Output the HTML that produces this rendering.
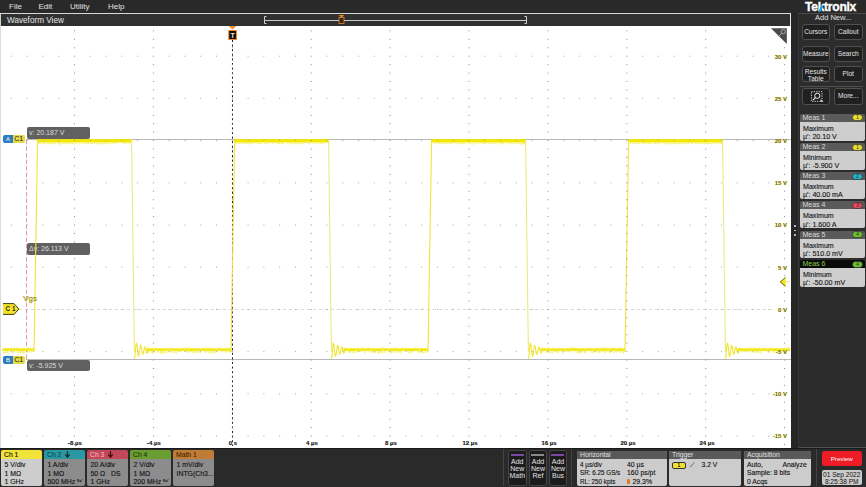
<!DOCTYPE html>
<html><head><meta charset="utf-8"><style>
*{box-sizing:border-box}
body{margin:0;width:866px;height:487px;overflow:hidden;background:#222;position:relative;font-family:"Liberation Sans",sans-serif}
.a{position:absolute}
svg{position:absolute;left:0;top:0}
.menu{left:0;top:0;width:866px;height:13px;background:#292929}
.menu span{position:absolute;top:1.5px;color:#e2e2e2;font-size:8px;line-height:10px}
.title{left:0;top:13px;width:791px;height:13px;background:#303030;border-top:1px solid #d8d8d8;border-left:1px solid #d0d0d0;border-right:1px solid #e8e8e8}
.title span{position:absolute;left:6px;top:0.5px;color:#e6e6e6;font-size:8.2px;line-height:11px}
.plot{left:0;top:26px;width:791px;height:421.8px;background:#fff;border-left:1px solid #dcdcdc}
.rpanel{left:791px;top:13px;width:75px;height:435.5px;background:#2c2c2c}
.btn{position:absolute;width:28.5px;height:16px;border:1px solid #505050;border-radius:3px;background:#202020;color:#e4e4e4;font-size:6.6px;text-align:center;line-height:14px}
.meas{position:absolute;left:800px;width:65px;height:27px}
.mh{position:absolute;left:0;top:0;width:65px;height:8px;background:#5a5a5a;color:#dadada;font-size:7px;line-height:8px;padding-left:2.5px;border-radius:2px 2px 0 0}
.mb{position:absolute;left:0;top:8px;width:65px;height:19px;background:#cecece;color:#151515;font-size:7.1px;line-height:8.2px;padding:3.2px 0 0 3px;border-radius:0 0 2px 2px}
.badge{position:absolute;left:52px;top:1.2px;width:10px;height:5.8px;border-radius:3px;font-size:5px;line-height:5.8px;text-align:center;color:#333;display:flex;align-items:center;justify-content:center;box-shadow:0 0 0 0.5px #333}
.bot{left:0;top:447.8px;width:866px;height:39px;background:#2a2a2a;border-top:1px solid #1a1a1a}
.ch{position:absolute;top:450px;width:41.2px;height:35.6px;border-radius:2px;overflow:hidden}
.chh{height:9.3px;font-size:6.8px;line-height:9.3px;padding-left:3px}
.chb{height:26.3px;background:#8c8c8c;color:#111;font-size:6.9px;line-height:8.4px;padding:2px 0 0 3.5px}
.pnl{position:absolute;top:450.5px;height:35.5px;border-radius:2px;overflow:hidden;background:#cccccc}
.pnh{height:8.3px;background:#5a5a5a;color:#e0e0e0;font-size:6.8px;line-height:8.3px;padding-left:3px}
.pnb{color:#111;font-size:6.4px;line-height:8.4px;padding:1.3px 0 0 3px;position:relative;height:27px}
.ylab{position:absolute;color:#6e680e;font-size:6px;line-height:6px;text-align:right;width:30px;font-weight:bold;text-shadow:0 0 1.2px #f4ee60}
.xlab{position:absolute;color:#111;font-size:6px;line-height:7px;width:30px;text-align:center;font-weight:bold}
.cur{position:absolute;background:#606060;color:#dcdcdc;font-size:7px;line-height:11.5px;border-radius:2px;padding-left:2px}
.pnb,.chb,.mb,.xlab,.chh{-webkit-text-stroke:0.12px currentColor}
</style></head><body>
<div class="a menu">
 <span style="left:9px">File</span><span style="left:38.5px">Edit</span><span style="left:70px">Utility</span><span style="left:108px">Help</span>
</div>
<div class="a title"><span>Waveform View</span></div>
<div class="a plot"></div>
<svg width="866" height="487">
 <line x1="26" y1="139.5" x2="791" y2="139.5" stroke="#b8b8b8" stroke-width="1"/>
 <line x1="26" y1="359.5" x2="791" y2="359.5" stroke="#b8b8b8" stroke-width="1"/>
 <line x1="26.5" y1="140" x2="26.5" y2="359" stroke="#e89aa2" stroke-width="1" stroke-dasharray="4.5,2"/>
 <line x1="19" y1="309.5" x2="775" y2="309.5" stroke="#d8d8d8" stroke-width="1" stroke-dasharray="3,3"/>
 <line x1="232.5" y1="40" x2="232.5" y2="446" stroke="#222" stroke-width="1" stroke-dasharray="2,2.6"/>
 <rect x="2.50" y="348.30" width="31.50" height="2.70" fill="#f2e800"/><path d="M2.5,351.3 L3.0,352.0 L3.6,352.3 L4.1,353.2 L4.7,352.0 L5.2,353.1 L5.8,347.6 L6.3,350.3 L6.9,353.2 L7.4,351.4 L8.0,353.0 L8.5,348.1 L9.1,350.3 L9.7,348.9 L10.2,350.8 L10.8,351.0 L11.3,347.5 L11.9,348.7 L12.4,349.1 L13.0,353.1 L13.5,352.1 L14.1,348.4 L14.6,352.3 L15.2,348.3 L15.7,351.2 L16.3,348.2 L16.8,347.4 L17.4,352.8 L17.9,348.7 L18.5,348.7 L19.0,353.5 L19.6,352.8 L20.1,349.2 L20.7,353.4 L21.2,350.7 L21.8,351.6 L22.3,348.7 L22.9,353.2 L23.4,351.7 L24.0,353.4 L24.5,352.9 L25.1,349.3 L25.6,349.6 L26.2,348.4 L26.7,348.3 L27.3,347.8 L27.8,349.3 L28.4,351.1 L28.9,347.4 L29.5,351.6 L30.0,349.5 L30.6,349.3 L31.1,352.5 L31.7,350.4 L32.2,349.4 L32.8,350.4 L33.3,351.8 L33.9,347.8" fill="none" stroke="#f2ec50" stroke-width="0.7"/><line x1="34.00" y1="352" x2="37.60" y2="140" stroke="#eee440" stroke-width="1.1"/><rect x="37.40" y="139.10" width="94.20" height="3.30" fill="#f2e800"/><path d="M37.4,144.3 L37.9,141.7 L38.5,143.7 L39.0,144.0 L39.6,141.7 L40.1,143.8 L40.7,142.6 L41.2,143.2 L41.8,141.6 L42.3,141.7 L42.9,142.1 L43.4,144.3 L44.0,142.2 L44.5,143.7 L45.1,144.2 L45.6,144.2 L46.2,142.6 L46.7,142.6 L47.3,143.1 L47.8,143.8 L48.4,141.9 L48.9,143.7 L49.5,143.8 L50.0,144.0 L50.6,141.7 L51.1,144.2 L51.7,141.9 L52.2,142.6 L52.8,143.3 L53.3,144.2 L53.9,142.6 L54.4,144.2 L55.0,143.1 L55.5,142.5 L56.1,142.5 L56.6,142.1 L57.2,141.8 L57.7,142.0 L58.3,143.5 L58.8,144.4 L59.4,142.1 L59.9,141.7 L60.5,144.4 L61.0,143.1 L61.6,142.7 L62.1,142.3 L62.7,143.3 L63.2,143.9 L63.8,142.9 L64.3,142.8 L64.9,141.8 L65.4,144.2 L66.0,141.7 L66.5,143.0 L67.1,143.9 L67.6,142.0 L68.2,143.6 L68.7,144.3 L69.3,143.4 L69.8,143.8 L70.4,141.9 L70.9,142.8 L71.5,142.0 L72.0,144.0 L72.6,142.4 L73.1,142.9 L73.7,144.4 L74.2,144.0 L74.8,144.3 L75.3,142.9 L75.9,143.0 L76.4,143.6 L77.0,142.9 L77.5,142.4 L78.1,142.7 L78.6,142.0 L79.2,142.7 L79.7,144.4 L80.3,144.3 L80.8,143.4 L81.4,143.0 L81.9,142.5 L82.5,141.8 L83.0,142.4 L83.6,143.8 L84.1,144.0 L84.7,142.6 L85.2,143.8 L85.8,143.8 L86.3,143.5 L86.9,143.5 L87.4,143.7 L88.0,142.6 L88.5,143.6 L89.1,142.4 L89.6,143.0 L90.2,143.8 L90.7,143.5 L91.3,142.4 L91.8,144.2 L92.4,143.4 L92.9,143.2 L93.5,141.6 L94.0,143.1 L94.6,142.3 L95.1,143.5 L95.7,142.9 L96.2,143.9 L96.8,143.4 L97.3,143.8 L97.9,142.6 L98.4,143.4 L99.0,143.7 L99.5,143.9 L100.1,142.6 L100.6,144.0 L101.2,144.0 L101.7,143.5 L102.3,144.3 L102.8,144.3 L103.4,143.1 L103.9,143.1 L104.5,142.1 L105.0,143.9 L105.6,144.2 L106.1,142.9 L106.7,143.5 L107.2,143.6 L107.8,143.6 L108.3,142.1 L108.9,143.8 L109.4,143.2 L110.0,143.5 L110.5,142.8 L111.1,143.3 L111.6,143.8 L112.2,143.4 L112.7,143.6 L113.3,141.7 L113.8,142.0 L114.4,142.8 L114.9,143.4 L115.5,142.2 L116.0,143.5 L116.6,143.4 L117.1,141.7 L117.7,142.9 L118.2,142.2 L118.8,141.8 L119.3,142.0 L119.9,142.5 L120.4,142.1 L121.0,142.1 L121.5,141.7 L122.1,142.9 L122.6,142.7 L123.2,143.3 L123.7,143.3 L124.3,142.3 L124.8,144.1 L125.4,141.6 L125.9,142.7 L126.5,142.4 L127.0,142.7 L127.6,141.9 L128.1,143.9 L128.7,142.6 L129.2,141.7 L129.8,143.3 L130.3,141.9 L130.9,143.1 L131.4,142.6" fill="none" stroke="#f2ec50" stroke-width="0.7"/><line x1="131.60" y1="141" x2="134.40" y2="352" stroke="#ece870" stroke-width="1"/><rect x="146.40" y="348.30" width="84.60" height="2.70" fill="#f2e800"/><path d="M146.4,351.0 L147.0,353.3 L147.5,352.5 L148.1,350.0 L148.6,352.4 L149.2,351.4 L149.7,349.7 L150.3,348.3 L150.8,351.1 L151.4,350.9 L151.9,353.3 L152.5,353.4 L153.0,351.2 L153.6,349.6 L154.1,352.9 L154.7,347.4 L155.2,348.1 L155.8,350.9 L156.3,351.2 L156.9,348.3 L157.4,351.3 L158.0,352.9 L158.5,349.7 L159.1,350.1 L159.6,348.8 L160.2,349.2 L160.7,353.4 L161.3,349.8 L161.8,353.4 L162.4,353.1 L162.9,351.1 L163.5,349.0 L164.0,353.5 L164.6,350.5 L165.1,350.0 L165.7,349.4 L166.2,353.5 L166.8,350.4 L167.3,349.2 L167.9,350.4 L168.4,348.2 L169.0,351.3 L169.5,350.1 L170.1,349.2 L170.6,352.2 L171.2,352.5 L171.7,347.5 L172.3,350.7 L172.8,349.1 L173.4,353.2 L173.9,352.2 L174.5,348.9 L175.0,349.1 L175.6,348.4 L176.1,353.5 L176.7,349.2 L177.2,351.2 L177.8,350.3 L178.3,351.4 L178.9,351.1 L179.4,352.0 L180.0,348.1 L180.5,352.1 L181.1,349.3 L181.6,350.7 L182.2,349.5 L182.7,349.2 L183.3,350.7 L183.8,350.3 L184.4,349.6 L184.9,352.0 L185.5,351.1 L186.0,347.6 L186.6,349.0 L187.1,350.2 L187.7,353.1 L188.2,352.9 L188.8,350.8 L189.3,347.5 L189.9,352.2 L190.4,350.1 L191.0,351.0 L191.5,351.8 L192.1,351.3 L192.6,350.4 L193.2,353.1 L193.7,349.8 L194.3,349.8 L194.8,352.7 L195.4,348.6 L195.9,349.2 L196.5,352.5 L197.0,347.8 L197.6,352.6 L198.1,351.7 L198.7,350.1 L199.2,349.2 L199.8,352.2 L200.3,353.0 L200.9,348.3 L201.4,350.4 L202.0,350.8 L202.5,350.5 L203.1,349.5 L203.6,348.4 L204.2,351.0 L204.7,352.4 L205.3,347.8 L205.8,348.8 L206.4,352.5 L206.9,352.3 L207.5,351.5 L208.0,347.6 L208.6,351.9 L209.1,353.5 L209.7,353.6 L210.2,351.7 L210.8,347.7 L211.3,352.6 L211.9,348.8 L212.4,351.4 L213.0,353.3 L213.5,351.8 L214.1,348.2 L214.6,349.2 L215.2,353.1 L215.7,348.3 L216.3,351.2 L216.8,350.0 L217.4,348.4 L217.9,351.3 L218.5,347.7 L219.0,348.1 L219.6,349.8 L220.1,347.8 L220.7,347.8 L221.2,351.0 L221.8,352.0 L222.3,352.8 L222.9,348.2 L223.4,350.1 L224.0,349.4 L224.5,351.1 L225.1,350.4 L225.6,353.2 L226.2,349.7 L226.7,347.7 L227.3,351.7 L227.8,348.3 L228.4,351.3 L228.9,350.5 L229.5,353.0 L230.0,350.8 L230.6,351.2" fill="none" stroke="#f2ec50" stroke-width="0.7"/><path d="M134.40,358.90 L134.65,358.13 L134.90,356.32 L135.15,353.79 L135.40,350.89 L135.65,348.04 L135.90,345.62 L136.15,343.95 L136.40,343.21 L136.65,343.47 L136.90,344.64 L137.15,346.53 L137.40,348.84 L137.65,351.25 L137.90,353.43 L138.15,355.08 L138.40,356.01 L138.65,356.13 L138.90,355.45 L139.15,354.10 L139.40,352.29 L139.65,350.30 L139.90,348.39 L140.15,346.83 L140.40,345.81 L140.65,345.44 L140.90,345.75 L141.15,346.66 L141.40,348.02 L141.65,349.64 L141.90,351.27 L142.15,352.69 L142.40,353.73 L142.65,354.26 L142.90,354.23 L143.15,353.66 L143.40,352.67 L143.65,351.39 L143.90,350.03 L144.15,348.76 L144.40,347.76 L144.65,347.15 L144.90,346.99 L145.15,347.29 L145.40,347.98 L145.65,348.96 L145.90,350.07 L146.15,351.17 L146.40,352.10 L146.65,352.75 L146.90,353.03 L147.15,352.93 L147.40,352.48 L147.65,351.75 L147.90,350.86 L148.15,349.93 L148.40,349.10 L148.65,348.46 L148.90,348.10 L149.15,348.06" fill="none" stroke="#efe42a" stroke-width="1.05"/><line x1="231.00" y1="352" x2="234.60" y2="140" stroke="#eee440" stroke-width="1.1"/><rect x="234.40" y="139.10" width="94.20" height="3.30" fill="#f2e800"/><path d="M234.4,142.3 L235.0,143.1 L235.5,142.3 L236.1,143.7 L236.6,143.0 L237.2,142.0 L237.7,142.3 L238.3,142.6 L238.8,143.7 L239.4,142.1 L239.9,143.6 L240.5,143.4 L241.0,141.8 L241.6,143.5 L242.1,141.9 L242.7,141.9 L243.2,143.3 L243.8,142.3 L244.3,144.1 L244.9,142.9 L245.4,142.5 L246.0,143.8 L246.5,141.7 L247.1,143.6 L247.6,141.8 L248.2,142.0 L248.7,144.3 L249.3,143.5 L249.8,142.2 L250.4,141.9 L250.9,144.3 L251.5,143.5 L252.0,143.9 L252.6,142.0 L253.1,143.3 L253.7,142.6 L254.2,142.3 L254.8,142.5 L255.3,143.3 L255.9,142.6 L256.4,142.7 L257.0,142.0 L257.5,143.9 L258.1,143.4 L258.6,143.9 L259.2,142.8 L259.7,144.0 L260.3,143.0 L260.8,143.3 L261.4,143.2 L261.9,143.7 L262.5,142.7 L263.0,141.9 L263.6,141.7 L264.1,142.2 L264.7,141.7 L265.2,144.1 L265.8,142.9 L266.3,143.7 L266.9,141.6 L267.4,142.9 L268.0,144.1 L268.5,143.3 L269.1,142.8 L269.6,142.9 L270.2,141.9 L270.7,142.0 L271.3,142.0 L271.8,142.6 L272.4,142.7 L272.9,144.1 L273.5,142.0 L274.0,142.3 L274.6,142.4 L275.1,142.1 L275.7,142.4 L276.2,142.3 L276.8,142.9 L277.3,141.7 L277.9,144.2 L278.4,142.6 L279.0,144.2 L279.5,143.5 L280.1,143.5 L280.6,142.9 L281.2,144.2 L281.7,141.9 L282.3,143.5 L282.8,142.4 L283.4,143.5 L283.9,143.6 L284.5,142.1 L285.0,142.2 L285.6,141.7 L286.1,142.2 L286.7,141.8 L287.2,142.7 L287.8,144.3 L288.3,142.6 L288.9,142.5 L289.4,142.9 L290.0,142.4 L290.5,143.7 L291.1,143.6 L291.6,142.1 L292.2,142.3 L292.7,143.5 L293.3,144.2 L293.8,143.4 L294.4,142.8 L294.9,144.3 L295.5,141.6 L296.0,141.8 L296.6,143.8 L297.1,142.7 L297.7,141.7 L298.2,143.1 L298.8,144.4 L299.3,143.1 L299.9,142.6 L300.4,141.9 L301.0,141.8 L301.5,144.1 L302.1,143.0 L302.6,144.2 L303.2,141.8 L303.7,142.3 L304.3,141.7 L304.8,142.7 L305.4,141.8 L305.9,142.3 L306.5,142.7 L307.0,142.5 L307.6,141.7 L308.1,141.7 L308.7,144.3 L309.2,142.1 L309.8,143.0 L310.3,142.7 L310.9,143.1 L311.4,141.8 L312.0,142.5 L312.5,141.9 L313.1,143.1 L313.6,144.2 L314.2,143.3 L314.7,144.0 L315.3,142.2 L315.8,141.6 L316.4,143.1 L316.9,143.0 L317.5,143.2 L318.0,142.7 L318.6,143.4 L319.1,143.6 L319.7,144.2 L320.2,142.5 L320.8,142.9 L321.3,143.9 L321.9,142.2 L322.4,141.9 L323.0,142.5 L323.5,141.8 L324.1,143.8 L324.6,143.9 L325.2,142.5 L325.7,142.0 L326.3,141.8 L326.8,142.3 L327.4,141.8 L327.9,142.8 L328.5,143.2" fill="none" stroke="#f2ec50" stroke-width="0.7"/><line x1="328.60" y1="141" x2="331.40" y2="352" stroke="#ece870" stroke-width="1"/><rect x="343.40" y="348.30" width="84.60" height="2.70" fill="#f2e800"/><path d="M343.4,348.9 L344.0,347.8 L344.5,351.7 L345.1,347.7 L345.6,348.6 L346.2,349.2 L346.7,349.7 L347.3,348.0 L347.8,350.0 L348.4,349.3 L348.9,352.1 L349.5,350.8 L350.0,353.0 L350.6,351.5 L351.1,352.1 L351.7,351.0 L352.2,350.1 L352.8,352.5 L353.3,351.5 L353.9,353.3 L354.4,351.9 L355.0,351.7 L355.5,349.1 L356.1,352.4 L356.6,349.8 L357.2,348.2 L357.7,347.8 L358.3,348.5 L358.8,349.0 L359.4,351.6 L359.9,349.2 L360.5,347.8 L361.0,352.1 L361.6,350.9 L362.1,347.6 L362.7,347.7 L363.2,348.2 L363.8,349.6 L364.3,352.7 L364.9,353.3 L365.4,351.2 L366.0,348.8 L366.5,350.1 L367.1,349.6 L367.6,349.4 L368.2,347.5 L368.7,351.0 L369.3,352.5 L369.8,351.9 L370.4,348.0 L370.9,350.7 L371.5,348.5 L372.0,351.8 L372.6,350.2 L373.1,353.2 L373.7,352.3 L374.2,348.1 L374.8,349.4 L375.3,353.1 L375.9,350.3 L376.4,350.1 L377.0,350.1 L377.5,352.2 L378.1,353.2 L378.6,350.7 L379.2,353.4 L379.7,351.1 L380.3,348.0 L380.8,352.4 L381.4,350.0 L381.9,347.7 L382.5,353.5 L383.0,347.6 L383.6,351.0 L384.1,350.4 L384.7,352.9 L385.2,349.8 L385.8,348.7 L386.3,349.1 L386.9,348.6 L387.4,350.9 L388.0,349.6 L388.5,352.1 L389.1,348.9 L389.6,349.6 L390.2,348.9 L390.7,353.5 L391.3,352.6 L391.8,352.7 L392.4,351.2 L392.9,349.9 L393.5,348.3 L394.0,352.6 L394.6,350.4 L395.1,347.6 L395.7,348.5 L396.2,348.0 L396.8,351.8 L397.3,353.0 L397.9,348.6 L398.4,352.3 L399.0,349.4 L399.5,351.6 L400.1,352.8 L400.6,351.3 L401.2,352.4 L401.7,349.7 L402.3,347.5 L402.8,350.6 L403.4,351.0 L403.9,348.5 L404.5,349.8 L405.0,349.4 L405.6,347.6 L406.1,349.3 L406.7,349.8 L407.2,350.4 L407.8,351.8 L408.3,349.9 L408.9,353.5 L409.4,352.5 L410.0,353.1 L410.5,351.7 L411.1,351.6 L411.6,350.7 L412.2,352.4 L412.7,349.6 L413.3,351.1 L413.8,351.6 L414.4,350.6 L414.9,349.2 L415.5,347.9 L416.0,347.9 L416.6,349.6 L417.1,351.0 L417.7,352.1 L418.2,351.8 L418.8,349.3 L419.3,353.2 L419.9,349.1 L420.4,351.8 L421.0,347.8 L421.5,352.1 L422.1,351.6 L422.6,353.3 L423.2,353.0 L423.7,351.7 L424.3,352.6 L424.8,352.0 L425.4,351.2 L425.9,348.7 L426.5,350.6 L427.0,353.0 L427.6,348.9" fill="none" stroke="#f2ec50" stroke-width="0.7"/><path d="M331.40,358.90 L331.65,358.13 L331.90,356.32 L332.15,353.79 L332.40,350.89 L332.65,348.04 L332.90,345.62 L333.15,343.95 L333.40,343.21 L333.65,343.47 L333.90,344.64 L334.15,346.53 L334.40,348.84 L334.65,351.25 L334.90,353.43 L335.15,355.08 L335.40,356.01 L335.65,356.13 L335.90,355.45 L336.15,354.10 L336.40,352.29 L336.65,350.30 L336.90,348.39 L337.15,346.83 L337.40,345.81 L337.65,345.44 L337.90,345.75 L338.15,346.66 L338.40,348.02 L338.65,349.64 L338.90,351.27 L339.15,352.69 L339.40,353.73 L339.65,354.26 L339.90,354.23 L340.15,353.66 L340.40,352.67 L340.65,351.39 L340.90,350.03 L341.15,348.76 L341.40,347.76 L341.65,347.15 L341.90,346.99 L342.15,347.29 L342.40,347.98 L342.65,348.96 L342.90,350.07 L343.15,351.17 L343.40,352.10 L343.65,352.75 L343.90,353.03 L344.15,352.93 L344.40,352.48 L344.65,351.75 L344.90,350.86 L345.15,349.93 L345.40,349.10 L345.65,348.46 L345.90,348.10 L346.15,348.06" fill="none" stroke="#efe42a" stroke-width="1.05"/><line x1="428.00" y1="352" x2="431.60" y2="140" stroke="#eee440" stroke-width="1.1"/><rect x="431.40" y="139.10" width="94.20" height="3.30" fill="#f2e800"/><path d="M431.4,144.3 L431.9,143.1 L432.5,142.7 L433.1,141.6 L433.6,142.7 L434.2,142.1 L434.7,143.4 L435.3,144.1 L435.8,144.1 L436.4,143.3 L436.9,142.7 L437.5,141.9 L438.0,143.5 L438.6,143.1 L439.1,143.6 L439.7,142.6 L440.2,144.1 L440.8,142.2 L441.3,142.5 L441.9,142.3 L442.4,143.3 L443.0,144.1 L443.5,142.1 L444.1,143.4 L444.6,143.7 L445.2,142.2 L445.7,141.8 L446.3,143.2 L446.8,143.9 L447.4,144.1 L447.9,143.6 L448.5,142.8 L449.0,142.8 L449.6,143.1 L450.1,144.1 L450.7,142.4 L451.2,142.4 L451.8,143.3 L452.3,144.3 L452.9,142.1 L453.4,141.7 L454.0,141.9 L454.5,143.2 L455.1,143.3 L455.6,142.1 L456.2,142.1 L456.7,143.3 L457.3,143.4 L457.8,143.5 L458.4,143.6 L458.9,141.8 L459.5,143.0 L460.0,143.9 L460.6,144.3 L461.1,142.5 L461.7,144.0 L462.2,143.4 L462.8,144.2 L463.3,142.2 L463.9,143.6 L464.4,144.0 L465.0,142.9 L465.5,141.9 L466.1,142.1 L466.6,142.0 L467.2,141.9 L467.7,142.0 L468.3,143.3 L468.8,141.9 L469.4,143.7 L469.9,143.7 L470.5,143.9 L471.0,143.9 L471.6,143.6 L472.1,144.2 L472.7,144.3 L473.2,143.4 L473.8,144.3 L474.3,141.9 L474.9,141.9 L475.4,141.8 L476.0,142.2 L476.5,142.6 L477.1,142.9 L477.6,143.5 L478.2,143.7 L478.7,141.8 L479.3,142.7 L479.8,143.1 L480.4,142.7 L480.9,141.9 L481.5,143.3 L482.0,142.6 L482.6,143.5 L483.1,143.0 L483.7,144.3 L484.2,144.2 L484.8,141.8 L485.3,143.7 L485.9,143.6 L486.4,142.4 L487.0,141.9 L487.5,142.9 L488.1,142.6 L488.6,143.7 L489.2,144.2 L489.7,142.7 L490.3,142.4 L490.8,143.0 L491.4,143.6 L491.9,143.8 L492.5,143.2 L493.0,142.4 L493.6,142.5 L494.1,144.0 L494.7,143.1 L495.2,141.7 L495.8,142.8 L496.3,142.3 L496.9,143.5 L497.4,141.8 L498.0,142.4 L498.5,141.9 L499.1,142.9 L499.6,144.4 L500.2,143.1 L500.7,142.7 L501.3,144.2 L501.8,141.9 L502.4,142.6 L502.9,143.9 L503.5,141.6 L504.0,143.7 L504.6,142.6 L505.1,141.6 L505.7,142.3 L506.2,142.9 L506.8,142.7 L507.3,143.0 L507.9,141.7 L508.4,142.2 L509.0,144.3 L509.5,142.8 L510.1,142.9 L510.6,141.8 L511.2,142.4 L511.7,144.3 L512.3,143.5 L512.8,143.0 L513.4,141.7 L513.9,142.7 L514.5,143.8 L515.0,142.8 L515.6,143.3 L516.1,144.1 L516.7,143.4 L517.2,143.4 L517.8,141.7 L518.3,141.7 L518.9,143.8 L519.4,142.8 L520.0,144.0 L520.5,143.9 L521.1,144.2 L521.6,142.7 L522.2,144.4 L522.7,143.7 L523.3,144.1 L523.8,142.0 L524.4,143.8 L524.9,142.8 L525.5,144.3" fill="none" stroke="#f2ec50" stroke-width="0.7"/><line x1="525.60" y1="141" x2="528.40" y2="352" stroke="#ece870" stroke-width="1"/><rect x="540.40" y="348.30" width="84.60" height="2.70" fill="#f2e800"/><path d="M540.4,353.6 L540.9,348.7 L541.5,350.0 L542.0,349.1 L542.6,350.3 L543.1,349.2 L543.7,351.5 L544.2,348.2 L544.8,348.4 L545.3,350.2 L545.9,347.9 L546.4,349.8 L547.0,353.0 L547.5,352.9 L548.1,348.6 L548.6,347.5 L549.2,352.5 L549.7,353.4 L550.3,351.1 L550.8,348.2 L551.4,348.9 L551.9,353.1 L552.5,353.2 L553.0,347.6 L553.6,348.5 L554.1,350.1 L554.7,349.1 L555.2,352.1 L555.8,349.7 L556.3,352.2 L556.9,348.3 L557.4,350.6 L558.0,353.4 L558.5,351.8 L559.1,348.0 L559.6,348.1 L560.2,351.4 L560.7,349.7 L561.3,349.7 L561.8,350.4 L562.4,351.0 L562.9,353.4 L563.5,348.9 L564.0,350.9 L564.6,349.0 L565.1,350.8 L565.7,351.9 L566.2,348.2 L566.8,350.4 L567.3,351.8 L567.9,347.5 L568.4,352.2 L569.0,350.0 L569.5,350.5 L570.1,351.2 L570.6,352.3 L571.2,347.7 L571.7,350.5 L572.3,347.6 L572.8,349.8 L573.4,349.5 L573.9,347.5 L574.5,349.2 L575.0,350.2 L575.6,351.5 L576.1,353.1 L576.7,349.7 L577.2,350.7 L577.8,351.8 L578.3,353.2 L578.9,353.3 L579.4,353.5 L580.0,349.3 L580.5,348.4 L581.1,353.2 L581.6,347.9 L582.2,350.2 L582.7,352.0 L583.3,350.7 L583.8,349.8 L584.4,353.1 L584.9,349.3 L585.5,350.8 L586.0,352.5 L586.6,348.3 L587.1,349.6 L587.7,350.5 L588.2,350.9 L588.8,348.7 L589.3,350.2 L589.9,347.8 L590.4,347.9 L591.0,349.5 L591.5,348.3 L592.1,353.4 L592.6,349.0 L593.2,349.1 L593.7,352.3 L594.3,352.0 L594.8,349.0 L595.4,352.5 L595.9,351.3 L596.5,349.8 L597.0,351.3 L597.6,348.9 L598.1,349.0 L598.7,352.8 L599.2,350.1 L599.8,353.0 L600.3,348.5 L600.9,348.3 L601.4,347.7 L602.0,352.0 L602.5,350.9 L603.1,347.5 L603.6,347.7 L604.2,352.5 L604.7,350.5 L605.3,352.8 L605.8,347.6 L606.4,351.1 L606.9,348.1 L607.5,351.9 L608.0,351.2 L608.6,351.2 L609.1,348.8 L609.7,353.3 L610.2,348.1 L610.8,347.8 L611.3,351.6 L611.9,348.0 L612.4,347.8 L613.0,350.3 L613.5,351.4 L614.1,352.9 L614.6,351.9 L615.2,347.8 L615.7,351.4 L616.3,352.6 L616.8,348.1 L617.4,352.1 L617.9,349.0 L618.5,349.3 L619.0,347.4 L619.6,352.1 L620.1,350.6 L620.7,353.0 L621.2,350.3 L621.8,348.4 L622.3,348.7 L622.9,349.0 L623.4,353.3 L624.0,348.7 L624.5,347.9" fill="none" stroke="#f2ec50" stroke-width="0.7"/><path d="M528.40,358.90 L528.65,358.13 L528.90,356.32 L529.15,353.79 L529.40,350.89 L529.65,348.04 L529.90,345.62 L530.15,343.95 L530.40,343.21 L530.65,343.47 L530.90,344.64 L531.15,346.53 L531.40,348.84 L531.65,351.25 L531.90,353.43 L532.15,355.08 L532.40,356.01 L532.65,356.13 L532.90,355.45 L533.15,354.10 L533.40,352.29 L533.65,350.30 L533.90,348.39 L534.15,346.83 L534.40,345.81 L534.65,345.44 L534.90,345.75 L535.15,346.66 L535.40,348.02 L535.65,349.64 L535.90,351.27 L536.15,352.69 L536.40,353.73 L536.65,354.26 L536.90,354.23 L537.15,353.66 L537.40,352.67 L537.65,351.39 L537.90,350.03 L538.15,348.76 L538.40,347.76 L538.65,347.15 L538.90,346.99 L539.15,347.29 L539.40,347.98 L539.65,348.96 L539.90,350.07 L540.15,351.17 L540.40,352.10 L540.65,352.75 L540.90,353.03 L541.15,352.93 L541.40,352.48 L541.65,351.75 L541.90,350.86 L542.15,349.93 L542.40,349.10 L542.65,348.46 L542.90,348.10 L543.15,348.06" fill="none" stroke="#efe42a" stroke-width="1.05"/><line x1="625.00" y1="352" x2="628.60" y2="140" stroke="#eee440" stroke-width="1.1"/><rect x="628.40" y="139.10" width="94.20" height="3.30" fill="#f2e800"/><path d="M628.4,142.6 L628.9,141.8 L629.5,142.8 L630.0,143.3 L630.6,143.4 L631.1,142.1 L631.7,142.0 L632.2,143.0 L632.8,143.5 L633.3,142.9 L633.9,143.2 L634.4,144.2 L635.0,142.0 L635.5,142.3 L636.1,143.0 L636.6,143.1 L637.2,144.1 L637.7,143.2 L638.3,143.5 L638.8,142.8 L639.4,143.8 L639.9,143.9 L640.5,142.4 L641.0,141.9 L641.6,142.3 L642.1,142.6 L642.7,144.1 L643.2,142.3 L643.8,143.4 L644.3,143.4 L644.9,144.3 L645.4,141.9 L646.0,143.8 L646.5,142.5 L647.1,141.9 L647.6,143.4 L648.2,144.0 L648.7,143.2 L649.3,141.7 L649.8,144.3 L650.4,142.7 L650.9,143.4 L651.5,143.6 L652.0,142.3 L652.6,142.7 L653.1,142.5 L653.7,141.9 L654.2,141.8 L654.8,143.6 L655.3,142.7 L655.9,144.0 L656.4,141.8 L657.0,142.4 L657.5,142.1 L658.1,144.2 L658.6,143.8 L659.2,144.1 L659.7,143.0 L660.3,141.9 L660.8,142.8 L661.4,142.2 L661.9,141.7 L662.5,143.2 L663.0,142.4 L663.6,141.9 L664.1,143.0 L664.7,144.2 L665.2,144.2 L665.8,142.9 L666.3,141.9 L666.9,143.8 L667.4,141.9 L668.0,143.1 L668.5,141.8 L669.1,144.4 L669.6,143.1 L670.2,142.8 L670.7,142.4 L671.3,143.1 L671.8,144.3 L672.4,142.8 L672.9,142.2 L673.5,143.0 L674.0,144.2 L674.6,142.7 L675.1,143.4 L675.7,144.2 L676.2,142.5 L676.8,143.9 L677.3,143.1 L677.9,142.0 L678.4,141.8 L679.0,144.2 L679.5,142.9 L680.1,142.8 L680.6,144.2 L681.2,143.2 L681.7,143.0 L682.3,142.4 L682.8,143.7 L683.4,142.3 L683.9,142.9 L684.5,143.7 L685.0,143.3 L685.6,142.0 L686.1,142.2 L686.7,143.5 L687.2,143.6 L687.8,141.9 L688.3,144.4 L688.9,142.0 L689.4,142.1 L690.0,141.9 L690.5,142.8 L691.1,143.3 L691.6,144.0 L692.2,142.1 L692.7,143.6 L693.3,141.9 L693.8,143.2 L694.4,142.3 L694.9,142.6 L695.5,141.7 L696.0,143.6 L696.6,141.9 L697.1,143.7 L697.7,142.5 L698.2,143.3 L698.8,143.4 L699.3,143.0 L699.9,144.0 L700.4,144.2 L701.0,142.4 L701.5,142.5 L702.1,144.1 L702.6,142.0 L703.2,142.8 L703.7,142.8 L704.3,144.3 L704.8,142.0 L705.4,143.4 L705.9,143.7 L706.5,143.6 L707.0,141.6 L707.6,144.2 L708.1,142.5 L708.7,144.0 L709.2,143.5 L709.8,142.8 L710.3,143.9 L710.9,143.5 L711.4,142.6 L712.0,143.6 L712.5,143.0 L713.1,143.6 L713.6,143.3 L714.2,143.8 L714.7,142.0 L715.3,143.0 L715.8,141.6 L716.4,143.8 L716.9,143.8 L717.5,143.9 L718.0,141.7 L718.6,143.1 L719.1,142.9 L719.7,141.9 L720.2,142.2 L720.8,144.3 L721.3,144.0 L721.9,142.3 L722.4,143.9" fill="none" stroke="#f2ec50" stroke-width="0.7"/><line x1="722.60" y1="141" x2="725.40" y2="352" stroke="#ece870" stroke-width="1"/><rect x="737.40" y="348.30" width="52.60" height="2.70" fill="#f2e800"/><path d="M737.4,351.4 L737.9,349.8 L738.5,351.4 L739.0,348.8 L739.6,349.1 L740.1,347.5 L740.7,351.5 L741.2,351.0 L741.8,352.0 L742.3,350.5 L742.9,350.1 L743.4,349.3 L744.0,352.0 L744.5,349.7 L745.1,351.1 L745.6,352.1 L746.2,350.2 L746.7,351.7 L747.3,347.8 L747.8,349.0 L748.4,352.6 L748.9,348.3 L749.5,347.8 L750.0,347.5 L750.6,352.1 L751.1,348.1 L751.7,350.2 L752.2,350.1 L752.8,352.4 L753.3,350.4 L753.9,350.6 L754.4,347.6 L755.0,352.3 L755.5,352.2 L756.1,351.3 L756.6,352.6 L757.2,351.2 L757.7,351.8 L758.3,352.7 L758.8,351.2 L759.4,347.5 L759.9,352.9 L760.5,353.5 L761.0,348.6 L761.6,347.8 L762.1,349.5 L762.7,348.0 L763.2,349.7 L763.8,348.0 L764.3,348.8 L764.9,347.4 L765.4,350.1 L766.0,349.3 L766.5,351.9 L767.1,349.8 L767.6,348.4 L768.2,353.3 L768.7,352.9 L769.3,351.7 L769.8,348.7 L770.4,349.9 L770.9,350.2 L771.5,349.9 L772.0,347.6 L772.6,350.2 L773.1,352.2 L773.7,351.7 L774.2,352.7 L774.8,351.6 L775.3,352.1 L775.9,352.8 L776.4,353.1 L777.0,352.3 L777.5,350.0 L778.1,351.5 L778.6,351.5 L779.2,352.9 L779.7,351.8 L780.3,350.1 L780.8,348.6 L781.4,349.4 L781.9,349.0 L782.5,351.6 L783.0,352.2 L783.6,348.6 L784.1,350.7 L784.7,352.6 L785.2,349.7 L785.8,348.0 L786.3,351.2 L786.9,349.6 L787.4,348.3 L788.0,349.2 L788.5,347.4 L789.1,348.3 L789.6,350.0" fill="none" stroke="#f2ec50" stroke-width="0.7"/><path d="M725.40,358.90 L725.65,358.13 L725.90,356.32 L726.15,353.79 L726.40,350.89 L726.65,348.04 L726.90,345.62 L727.15,343.95 L727.40,343.21 L727.65,343.47 L727.90,344.64 L728.15,346.53 L728.40,348.84 L728.65,351.25 L728.90,353.43 L729.15,355.08 L729.40,356.01 L729.65,356.13 L729.90,355.45 L730.15,354.10 L730.40,352.29 L730.65,350.30 L730.90,348.39 L731.15,346.83 L731.40,345.81 L731.65,345.44 L731.90,345.75 L732.15,346.66 L732.40,348.02 L732.65,349.64 L732.90,351.27 L733.15,352.69 L733.40,353.73 L733.65,354.26 L733.90,354.23 L734.15,353.66 L734.40,352.67 L734.65,351.39 L734.90,350.03 L735.15,348.76 L735.40,347.76 L735.65,347.15 L735.90,346.99 L736.15,347.29 L736.40,347.98 L736.65,348.96 L736.90,350.07 L737.15,351.17 L737.40,352.10 L737.65,352.75 L737.90,353.03 L738.15,352.93 L738.40,352.48 L738.65,351.75 L738.90,350.86 L739.15,349.93 L739.40,349.10 L739.65,348.46 L739.90,348.10 L740.15,348.06" fill="none" stroke="#efe42a" stroke-width="1.05"/>
 <g fill="#8a8a8a"><rect x="74.00" y="30.38" width="1" height="1"/><rect x="74.00" y="38.82" width="1" height="1"/><rect x="74.00" y="47.26" width="1" height="1"/><rect x="74.00" y="55.70" width="1" height="1"/><rect x="74.00" y="64.14" width="1" height="1"/><rect x="74.00" y="72.58" width="1" height="1"/><rect x="74.00" y="81.02" width="1" height="1"/><rect x="74.00" y="89.46" width="1" height="1"/><rect x="74.00" y="97.90" width="1" height="1"/><rect x="74.00" y="106.34" width="1" height="1"/><rect x="74.00" y="114.78" width="1" height="1"/><rect x="74.00" y="123.22" width="1" height="1"/><rect x="74.00" y="131.66" width="1" height="1"/><rect x="74.00" y="140.10" width="1" height="1"/><rect x="74.00" y="148.54" width="1" height="1"/><rect x="74.00" y="156.98" width="1" height="1"/><rect x="74.00" y="165.42" width="1" height="1"/><rect x="74.00" y="173.86" width="1" height="1"/><rect x="74.00" y="182.30" width="1" height="1"/><rect x="74.00" y="190.74" width="1" height="1"/><rect x="74.00" y="199.18" width="1" height="1"/><rect x="74.00" y="207.62" width="1" height="1"/><rect x="74.00" y="216.06" width="1" height="1"/><rect x="74.00" y="224.50" width="1" height="1"/><rect x="74.00" y="232.94" width="1" height="1"/><rect x="74.00" y="241.38" width="1" height="1"/><rect x="74.00" y="249.82" width="1" height="1"/><rect x="74.00" y="258.26" width="1" height="1"/><rect x="74.00" y="266.70" width="1" height="1"/><rect x="74.00" y="275.14" width="1" height="1"/><rect x="74.00" y="283.58" width="1" height="1"/><rect x="74.00" y="292.02" width="1" height="1"/><rect x="74.00" y="300.46" width="1" height="1"/><rect x="74.00" y="308.90" width="1" height="1"/><rect x="74.00" y="317.34" width="1" height="1"/><rect x="74.00" y="325.78" width="1" height="1"/><rect x="74.00" y="334.22" width="1" height="1"/><rect x="74.00" y="342.66" width="1" height="1"/><rect x="74.00" y="351.10" width="1" height="1"/><rect x="74.00" y="359.54" width="1" height="1"/><rect x="74.00" y="367.98" width="1" height="1"/><rect x="74.00" y="376.42" width="1" height="1"/><rect x="74.00" y="384.86" width="1" height="1"/><rect x="74.00" y="393.30" width="1" height="1"/><rect x="74.00" y="401.74" width="1" height="1"/><rect x="74.00" y="410.18" width="1" height="1"/><rect x="74.00" y="418.62" width="1" height="1"/><rect x="74.00" y="427.06" width="1" height="1"/><rect x="74.00" y="435.50" width="1" height="1"/><rect x="74.00" y="443.94" width="1" height="1"/><rect x="152.90" y="30.38" width="1" height="1"/><rect x="152.90" y="38.82" width="1" height="1"/><rect x="152.90" y="47.26" width="1" height="1"/><rect x="152.90" y="55.70" width="1" height="1"/><rect x="152.90" y="64.14" width="1" height="1"/><rect x="152.90" y="72.58" width="1" height="1"/><rect x="152.90" y="81.02" width="1" height="1"/><rect x="152.90" y="89.46" width="1" height="1"/><rect x="152.90" y="97.90" width="1" height="1"/><rect x="152.90" y="106.34" width="1" height="1"/><rect x="152.90" y="114.78" width="1" height="1"/><rect x="152.90" y="123.22" width="1" height="1"/><rect x="152.90" y="131.66" width="1" height="1"/><rect x="152.90" y="140.10" width="1" height="1"/><rect x="152.90" y="148.54" width="1" height="1"/><rect x="152.90" y="156.98" width="1" height="1"/><rect x="152.90" y="165.42" width="1" height="1"/><rect x="152.90" y="173.86" width="1" height="1"/><rect x="152.90" y="182.30" width="1" height="1"/><rect x="152.90" y="190.74" width="1" height="1"/><rect x="152.90" y="199.18" width="1" height="1"/><rect x="152.90" y="207.62" width="1" height="1"/><rect x="152.90" y="216.06" width="1" height="1"/><rect x="152.90" y="224.50" width="1" height="1"/><rect x="152.90" y="232.94" width="1" height="1"/><rect x="152.90" y="241.38" width="1" height="1"/><rect x="152.90" y="249.82" width="1" height="1"/><rect x="152.90" y="258.26" width="1" height="1"/><rect x="152.90" y="266.70" width="1" height="1"/><rect x="152.90" y="275.14" width="1" height="1"/><rect x="152.90" y="283.58" width="1" height="1"/><rect x="152.90" y="292.02" width="1" height="1"/><rect x="152.90" y="300.46" width="1" height="1"/><rect x="152.90" y="308.90" width="1" height="1"/><rect x="152.90" y="317.34" width="1" height="1"/><rect x="152.90" y="325.78" width="1" height="1"/><rect x="152.90" y="334.22" width="1" height="1"/><rect x="152.90" y="342.66" width="1" height="1"/><rect x="152.90" y="351.10" width="1" height="1"/><rect x="152.90" y="359.54" width="1" height="1"/><rect x="152.90" y="367.98" width="1" height="1"/><rect x="152.90" y="376.42" width="1" height="1"/><rect x="152.90" y="384.86" width="1" height="1"/><rect x="152.90" y="393.30" width="1" height="1"/><rect x="152.90" y="401.74" width="1" height="1"/><rect x="152.90" y="410.18" width="1" height="1"/><rect x="152.90" y="418.62" width="1" height="1"/><rect x="152.90" y="427.06" width="1" height="1"/><rect x="152.90" y="435.50" width="1" height="1"/><rect x="152.90" y="443.94" width="1" height="1"/><rect x="231.80" y="30.38" width="1" height="1"/><rect x="231.80" y="38.82" width="1" height="1"/><rect x="231.80" y="47.26" width="1" height="1"/><rect x="231.80" y="55.70" width="1" height="1"/><rect x="231.80" y="64.14" width="1" height="1"/><rect x="231.80" y="72.58" width="1" height="1"/><rect x="231.80" y="81.02" width="1" height="1"/><rect x="231.80" y="89.46" width="1" height="1"/><rect x="231.80" y="97.90" width="1" height="1"/><rect x="231.80" y="106.34" width="1" height="1"/><rect x="231.80" y="114.78" width="1" height="1"/><rect x="231.80" y="123.22" width="1" height="1"/><rect x="231.80" y="131.66" width="1" height="1"/><rect x="231.80" y="140.10" width="1" height="1"/><rect x="231.80" y="148.54" width="1" height="1"/><rect x="231.80" y="156.98" width="1" height="1"/><rect x="231.80" y="165.42" width="1" height="1"/><rect x="231.80" y="173.86" width="1" height="1"/><rect x="231.80" y="182.30" width="1" height="1"/><rect x="231.80" y="190.74" width="1" height="1"/><rect x="231.80" y="199.18" width="1" height="1"/><rect x="231.80" y="207.62" width="1" height="1"/><rect x="231.80" y="216.06" width="1" height="1"/><rect x="231.80" y="224.50" width="1" height="1"/><rect x="231.80" y="232.94" width="1" height="1"/><rect x="231.80" y="241.38" width="1" height="1"/><rect x="231.80" y="249.82" width="1" height="1"/><rect x="231.80" y="258.26" width="1" height="1"/><rect x="231.80" y="266.70" width="1" height="1"/><rect x="231.80" y="275.14" width="1" height="1"/><rect x="231.80" y="283.58" width="1" height="1"/><rect x="231.80" y="292.02" width="1" height="1"/><rect x="231.80" y="300.46" width="1" height="1"/><rect x="231.80" y="308.90" width="1" height="1"/><rect x="231.80" y="317.34" width="1" height="1"/><rect x="231.80" y="325.78" width="1" height="1"/><rect x="231.80" y="334.22" width="1" height="1"/><rect x="231.80" y="342.66" width="1" height="1"/><rect x="231.80" y="351.10" width="1" height="1"/><rect x="231.80" y="359.54" width="1" height="1"/><rect x="231.80" y="367.98" width="1" height="1"/><rect x="231.80" y="376.42" width="1" height="1"/><rect x="231.80" y="384.86" width="1" height="1"/><rect x="231.80" y="393.30" width="1" height="1"/><rect x="231.80" y="401.74" width="1" height="1"/><rect x="231.80" y="410.18" width="1" height="1"/><rect x="231.80" y="418.62" width="1" height="1"/><rect x="231.80" y="427.06" width="1" height="1"/><rect x="231.80" y="435.50" width="1" height="1"/><rect x="231.80" y="443.94" width="1" height="1"/><rect x="310.70" y="30.38" width="1" height="1"/><rect x="310.70" y="38.82" width="1" height="1"/><rect x="310.70" y="47.26" width="1" height="1"/><rect x="310.70" y="55.70" width="1" height="1"/><rect x="310.70" y="64.14" width="1" height="1"/><rect x="310.70" y="72.58" width="1" height="1"/><rect x="310.70" y="81.02" width="1" height="1"/><rect x="310.70" y="89.46" width="1" height="1"/><rect x="310.70" y="97.90" width="1" height="1"/><rect x="310.70" y="106.34" width="1" height="1"/><rect x="310.70" y="114.78" width="1" height="1"/><rect x="310.70" y="123.22" width="1" height="1"/><rect x="310.70" y="131.66" width="1" height="1"/><rect x="310.70" y="140.10" width="1" height="1"/><rect x="310.70" y="148.54" width="1" height="1"/><rect x="310.70" y="156.98" width="1" height="1"/><rect x="310.70" y="165.42" width="1" height="1"/><rect x="310.70" y="173.86" width="1" height="1"/><rect x="310.70" y="182.30" width="1" height="1"/><rect x="310.70" y="190.74" width="1" height="1"/><rect x="310.70" y="199.18" width="1" height="1"/><rect x="310.70" y="207.62" width="1" height="1"/><rect x="310.70" y="216.06" width="1" height="1"/><rect x="310.70" y="224.50" width="1" height="1"/><rect x="310.70" y="232.94" width="1" height="1"/><rect x="310.70" y="241.38" width="1" height="1"/><rect x="310.70" y="249.82" width="1" height="1"/><rect x="310.70" y="258.26" width="1" height="1"/><rect x="310.70" y="266.70" width="1" height="1"/><rect x="310.70" y="275.14" width="1" height="1"/><rect x="310.70" y="283.58" width="1" height="1"/><rect x="310.70" y="292.02" width="1" height="1"/><rect x="310.70" y="300.46" width="1" height="1"/><rect x="310.70" y="308.90" width="1" height="1"/><rect x="310.70" y="317.34" width="1" height="1"/><rect x="310.70" y="325.78" width="1" height="1"/><rect x="310.70" y="334.22" width="1" height="1"/><rect x="310.70" y="342.66" width="1" height="1"/><rect x="310.70" y="351.10" width="1" height="1"/><rect x="310.70" y="359.54" width="1" height="1"/><rect x="310.70" y="367.98" width="1" height="1"/><rect x="310.70" y="376.42" width="1" height="1"/><rect x="310.70" y="384.86" width="1" height="1"/><rect x="310.70" y="393.30" width="1" height="1"/><rect x="310.70" y="401.74" width="1" height="1"/><rect x="310.70" y="410.18" width="1" height="1"/><rect x="310.70" y="418.62" width="1" height="1"/><rect x="310.70" y="427.06" width="1" height="1"/><rect x="310.70" y="435.50" width="1" height="1"/><rect x="310.70" y="443.94" width="1" height="1"/><rect x="389.60" y="30.38" width="1" height="1"/><rect x="389.60" y="38.82" width="1" height="1"/><rect x="389.60" y="47.26" width="1" height="1"/><rect x="389.60" y="55.70" width="1" height="1"/><rect x="389.60" y="64.14" width="1" height="1"/><rect x="389.60" y="72.58" width="1" height="1"/><rect x="389.60" y="81.02" width="1" height="1"/><rect x="389.60" y="89.46" width="1" height="1"/><rect x="389.60" y="97.90" width="1" height="1"/><rect x="389.60" y="106.34" width="1" height="1"/><rect x="389.60" y="114.78" width="1" height="1"/><rect x="389.60" y="123.22" width="1" height="1"/><rect x="389.60" y="131.66" width="1" height="1"/><rect x="389.60" y="140.10" width="1" height="1"/><rect x="389.60" y="148.54" width="1" height="1"/><rect x="389.60" y="156.98" width="1" height="1"/><rect x="389.60" y="165.42" width="1" height="1"/><rect x="389.60" y="173.86" width="1" height="1"/><rect x="389.60" y="182.30" width="1" height="1"/><rect x="389.60" y="190.74" width="1" height="1"/><rect x="389.60" y="199.18" width="1" height="1"/><rect x="389.60" y="207.62" width="1" height="1"/><rect x="389.60" y="216.06" width="1" height="1"/><rect x="389.60" y="224.50" width="1" height="1"/><rect x="389.60" y="232.94" width="1" height="1"/><rect x="389.60" y="241.38" width="1" height="1"/><rect x="389.60" y="249.82" width="1" height="1"/><rect x="389.60" y="258.26" width="1" height="1"/><rect x="389.60" y="266.70" width="1" height="1"/><rect x="389.60" y="275.14" width="1" height="1"/><rect x="389.60" y="283.58" width="1" height="1"/><rect x="389.60" y="292.02" width="1" height="1"/><rect x="389.60" y="300.46" width="1" height="1"/><rect x="389.60" y="308.90" width="1" height="1"/><rect x="389.60" y="317.34" width="1" height="1"/><rect x="389.60" y="325.78" width="1" height="1"/><rect x="389.60" y="334.22" width="1" height="1"/><rect x="389.60" y="342.66" width="1" height="1"/><rect x="389.60" y="351.10" width="1" height="1"/><rect x="389.60" y="359.54" width="1" height="1"/><rect x="389.60" y="367.98" width="1" height="1"/><rect x="389.60" y="376.42" width="1" height="1"/><rect x="389.60" y="384.86" width="1" height="1"/><rect x="389.60" y="393.30" width="1" height="1"/><rect x="389.60" y="401.74" width="1" height="1"/><rect x="389.60" y="410.18" width="1" height="1"/><rect x="389.60" y="418.62" width="1" height="1"/><rect x="389.60" y="427.06" width="1" height="1"/><rect x="389.60" y="435.50" width="1" height="1"/><rect x="389.60" y="443.94" width="1" height="1"/><rect x="468.50" y="30.38" width="1" height="1"/><rect x="468.50" y="38.82" width="1" height="1"/><rect x="468.50" y="47.26" width="1" height="1"/><rect x="468.50" y="55.70" width="1" height="1"/><rect x="468.50" y="64.14" width="1" height="1"/><rect x="468.50" y="72.58" width="1" height="1"/><rect x="468.50" y="81.02" width="1" height="1"/><rect x="468.50" y="89.46" width="1" height="1"/><rect x="468.50" y="97.90" width="1" height="1"/><rect x="468.50" y="106.34" width="1" height="1"/><rect x="468.50" y="114.78" width="1" height="1"/><rect x="468.50" y="123.22" width="1" height="1"/><rect x="468.50" y="131.66" width="1" height="1"/><rect x="468.50" y="140.10" width="1" height="1"/><rect x="468.50" y="148.54" width="1" height="1"/><rect x="468.50" y="156.98" width="1" height="1"/><rect x="468.50" y="165.42" width="1" height="1"/><rect x="468.50" y="173.86" width="1" height="1"/><rect x="468.50" y="182.30" width="1" height="1"/><rect x="468.50" y="190.74" width="1" height="1"/><rect x="468.50" y="199.18" width="1" height="1"/><rect x="468.50" y="207.62" width="1" height="1"/><rect x="468.50" y="216.06" width="1" height="1"/><rect x="468.50" y="224.50" width="1" height="1"/><rect x="468.50" y="232.94" width="1" height="1"/><rect x="468.50" y="241.38" width="1" height="1"/><rect x="468.50" y="249.82" width="1" height="1"/><rect x="468.50" y="258.26" width="1" height="1"/><rect x="468.50" y="266.70" width="1" height="1"/><rect x="468.50" y="275.14" width="1" height="1"/><rect x="468.50" y="283.58" width="1" height="1"/><rect x="468.50" y="292.02" width="1" height="1"/><rect x="468.50" y="300.46" width="1" height="1"/><rect x="468.50" y="308.90" width="1" height="1"/><rect x="468.50" y="317.34" width="1" height="1"/><rect x="468.50" y="325.78" width="1" height="1"/><rect x="468.50" y="334.22" width="1" height="1"/><rect x="468.50" y="342.66" width="1" height="1"/><rect x="468.50" y="351.10" width="1" height="1"/><rect x="468.50" y="359.54" width="1" height="1"/><rect x="468.50" y="367.98" width="1" height="1"/><rect x="468.50" y="376.42" width="1" height="1"/><rect x="468.50" y="384.86" width="1" height="1"/><rect x="468.50" y="393.30" width="1" height="1"/><rect x="468.50" y="401.74" width="1" height="1"/><rect x="468.50" y="410.18" width="1" height="1"/><rect x="468.50" y="418.62" width="1" height="1"/><rect x="468.50" y="427.06" width="1" height="1"/><rect x="468.50" y="435.50" width="1" height="1"/><rect x="468.50" y="443.94" width="1" height="1"/><rect x="547.40" y="30.38" width="1" height="1"/><rect x="547.40" y="38.82" width="1" height="1"/><rect x="547.40" y="47.26" width="1" height="1"/><rect x="547.40" y="55.70" width="1" height="1"/><rect x="547.40" y="64.14" width="1" height="1"/><rect x="547.40" y="72.58" width="1" height="1"/><rect x="547.40" y="81.02" width="1" height="1"/><rect x="547.40" y="89.46" width="1" height="1"/><rect x="547.40" y="97.90" width="1" height="1"/><rect x="547.40" y="106.34" width="1" height="1"/><rect x="547.40" y="114.78" width="1" height="1"/><rect x="547.40" y="123.22" width="1" height="1"/><rect x="547.40" y="131.66" width="1" height="1"/><rect x="547.40" y="140.10" width="1" height="1"/><rect x="547.40" y="148.54" width="1" height="1"/><rect x="547.40" y="156.98" width="1" height="1"/><rect x="547.40" y="165.42" width="1" height="1"/><rect x="547.40" y="173.86" width="1" height="1"/><rect x="547.40" y="182.30" width="1" height="1"/><rect x="547.40" y="190.74" width="1" height="1"/><rect x="547.40" y="199.18" width="1" height="1"/><rect x="547.40" y="207.62" width="1" height="1"/><rect x="547.40" y="216.06" width="1" height="1"/><rect x="547.40" y="224.50" width="1" height="1"/><rect x="547.40" y="232.94" width="1" height="1"/><rect x="547.40" y="241.38" width="1" height="1"/><rect x="547.40" y="249.82" width="1" height="1"/><rect x="547.40" y="258.26" width="1" height="1"/><rect x="547.40" y="266.70" width="1" height="1"/><rect x="547.40" y="275.14" width="1" height="1"/><rect x="547.40" y="283.58" width="1" height="1"/><rect x="547.40" y="292.02" width="1" height="1"/><rect x="547.40" y="300.46" width="1" height="1"/><rect x="547.40" y="308.90" width="1" height="1"/><rect x="547.40" y="317.34" width="1" height="1"/><rect x="547.40" y="325.78" width="1" height="1"/><rect x="547.40" y="334.22" width="1" height="1"/><rect x="547.40" y="342.66" width="1" height="1"/><rect x="547.40" y="351.10" width="1" height="1"/><rect x="547.40" y="359.54" width="1" height="1"/><rect x="547.40" y="367.98" width="1" height="1"/><rect x="547.40" y="376.42" width="1" height="1"/><rect x="547.40" y="384.86" width="1" height="1"/><rect x="547.40" y="393.30" width="1" height="1"/><rect x="547.40" y="401.74" width="1" height="1"/><rect x="547.40" y="410.18" width="1" height="1"/><rect x="547.40" y="418.62" width="1" height="1"/><rect x="547.40" y="427.06" width="1" height="1"/><rect x="547.40" y="435.50" width="1" height="1"/><rect x="547.40" y="443.94" width="1" height="1"/><rect x="626.30" y="30.38" width="1" height="1"/><rect x="626.30" y="38.82" width="1" height="1"/><rect x="626.30" y="47.26" width="1" height="1"/><rect x="626.30" y="55.70" width="1" height="1"/><rect x="626.30" y="64.14" width="1" height="1"/><rect x="626.30" y="72.58" width="1" height="1"/><rect x="626.30" y="81.02" width="1" height="1"/><rect x="626.30" y="89.46" width="1" height="1"/><rect x="626.30" y="97.90" width="1" height="1"/><rect x="626.30" y="106.34" width="1" height="1"/><rect x="626.30" y="114.78" width="1" height="1"/><rect x="626.30" y="123.22" width="1" height="1"/><rect x="626.30" y="131.66" width="1" height="1"/><rect x="626.30" y="140.10" width="1" height="1"/><rect x="626.30" y="148.54" width="1" height="1"/><rect x="626.30" y="156.98" width="1" height="1"/><rect x="626.30" y="165.42" width="1" height="1"/><rect x="626.30" y="173.86" width="1" height="1"/><rect x="626.30" y="182.30" width="1" height="1"/><rect x="626.30" y="190.74" width="1" height="1"/><rect x="626.30" y="199.18" width="1" height="1"/><rect x="626.30" y="207.62" width="1" height="1"/><rect x="626.30" y="216.06" width="1" height="1"/><rect x="626.30" y="224.50" width="1" height="1"/><rect x="626.30" y="232.94" width="1" height="1"/><rect x="626.30" y="241.38" width="1" height="1"/><rect x="626.30" y="249.82" width="1" height="1"/><rect x="626.30" y="258.26" width="1" height="1"/><rect x="626.30" y="266.70" width="1" height="1"/><rect x="626.30" y="275.14" width="1" height="1"/><rect x="626.30" y="283.58" width="1" height="1"/><rect x="626.30" y="292.02" width="1" height="1"/><rect x="626.30" y="300.46" width="1" height="1"/><rect x="626.30" y="308.90" width="1" height="1"/><rect x="626.30" y="317.34" width="1" height="1"/><rect x="626.30" y="325.78" width="1" height="1"/><rect x="626.30" y="334.22" width="1" height="1"/><rect x="626.30" y="342.66" width="1" height="1"/><rect x="626.30" y="351.10" width="1" height="1"/><rect x="626.30" y="359.54" width="1" height="1"/><rect x="626.30" y="367.98" width="1" height="1"/><rect x="626.30" y="376.42" width="1" height="1"/><rect x="626.30" y="384.86" width="1" height="1"/><rect x="626.30" y="393.30" width="1" height="1"/><rect x="626.30" y="401.74" width="1" height="1"/><rect x="626.30" y="410.18" width="1" height="1"/><rect x="626.30" y="418.62" width="1" height="1"/><rect x="626.30" y="427.06" width="1" height="1"/><rect x="626.30" y="435.50" width="1" height="1"/><rect x="626.30" y="443.94" width="1" height="1"/><rect x="705.20" y="30.38" width="1" height="1"/><rect x="705.20" y="38.82" width="1" height="1"/><rect x="705.20" y="47.26" width="1" height="1"/><rect x="705.20" y="55.70" width="1" height="1"/><rect x="705.20" y="64.14" width="1" height="1"/><rect x="705.20" y="72.58" width="1" height="1"/><rect x="705.20" y="81.02" width="1" height="1"/><rect x="705.20" y="89.46" width="1" height="1"/><rect x="705.20" y="97.90" width="1" height="1"/><rect x="705.20" y="106.34" width="1" height="1"/><rect x="705.20" y="114.78" width="1" height="1"/><rect x="705.20" y="123.22" width="1" height="1"/><rect x="705.20" y="131.66" width="1" height="1"/><rect x="705.20" y="140.10" width="1" height="1"/><rect x="705.20" y="148.54" width="1" height="1"/><rect x="705.20" y="156.98" width="1" height="1"/><rect x="705.20" y="165.42" width="1" height="1"/><rect x="705.20" y="173.86" width="1" height="1"/><rect x="705.20" y="182.30" width="1" height="1"/><rect x="705.20" y="190.74" width="1" height="1"/><rect x="705.20" y="199.18" width="1" height="1"/><rect x="705.20" y="207.62" width="1" height="1"/><rect x="705.20" y="216.06" width="1" height="1"/><rect x="705.20" y="224.50" width="1" height="1"/><rect x="705.20" y="232.94" width="1" height="1"/><rect x="705.20" y="241.38" width="1" height="1"/><rect x="705.20" y="249.82" width="1" height="1"/><rect x="705.20" y="258.26" width="1" height="1"/><rect x="705.20" y="266.70" width="1" height="1"/><rect x="705.20" y="275.14" width="1" height="1"/><rect x="705.20" y="283.58" width="1" height="1"/><rect x="705.20" y="292.02" width="1" height="1"/><rect x="705.20" y="300.46" width="1" height="1"/><rect x="705.20" y="308.90" width="1" height="1"/><rect x="705.20" y="317.34" width="1" height="1"/><rect x="705.20" y="325.78" width="1" height="1"/><rect x="705.20" y="334.22" width="1" height="1"/><rect x="705.20" y="342.66" width="1" height="1"/><rect x="705.20" y="351.10" width="1" height="1"/><rect x="705.20" y="359.54" width="1" height="1"/><rect x="705.20" y="367.98" width="1" height="1"/><rect x="705.20" y="376.42" width="1" height="1"/><rect x="705.20" y="384.86" width="1" height="1"/><rect x="705.20" y="393.30" width="1" height="1"/><rect x="705.20" y="401.74" width="1" height="1"/><rect x="705.20" y="410.18" width="1" height="1"/><rect x="705.20" y="418.62" width="1" height="1"/><rect x="705.20" y="427.06" width="1" height="1"/><rect x="705.20" y="435.50" width="1" height="1"/><rect x="705.20" y="443.94" width="1" height="1"/><rect x="784.10" y="30.38" width="1" height="1"/><rect x="784.10" y="38.82" width="1" height="1"/><rect x="784.10" y="47.26" width="1" height="1"/><rect x="784.10" y="55.70" width="1" height="1"/><rect x="784.10" y="64.14" width="1" height="1"/><rect x="784.10" y="72.58" width="1" height="1"/><rect x="784.10" y="81.02" width="1" height="1"/><rect x="784.10" y="89.46" width="1" height="1"/><rect x="784.10" y="97.90" width="1" height="1"/><rect x="784.10" y="106.34" width="1" height="1"/><rect x="784.10" y="114.78" width="1" height="1"/><rect x="784.10" y="123.22" width="1" height="1"/><rect x="784.10" y="131.66" width="1" height="1"/><rect x="784.10" y="140.10" width="1" height="1"/><rect x="784.10" y="148.54" width="1" height="1"/><rect x="784.10" y="156.98" width="1" height="1"/><rect x="784.10" y="165.42" width="1" height="1"/><rect x="784.10" y="173.86" width="1" height="1"/><rect x="784.10" y="182.30" width="1" height="1"/><rect x="784.10" y="190.74" width="1" height="1"/><rect x="784.10" y="199.18" width="1" height="1"/><rect x="784.10" y="207.62" width="1" height="1"/><rect x="784.10" y="216.06" width="1" height="1"/><rect x="784.10" y="224.50" width="1" height="1"/><rect x="784.10" y="232.94" width="1" height="1"/><rect x="784.10" y="241.38" width="1" height="1"/><rect x="784.10" y="249.82" width="1" height="1"/><rect x="784.10" y="258.26" width="1" height="1"/><rect x="784.10" y="266.70" width="1" height="1"/><rect x="784.10" y="275.14" width="1" height="1"/><rect x="784.10" y="283.58" width="1" height="1"/><rect x="784.10" y="292.02" width="1" height="1"/><rect x="784.10" y="300.46" width="1" height="1"/><rect x="784.10" y="308.90" width="1" height="1"/><rect x="784.10" y="317.34" width="1" height="1"/><rect x="784.10" y="325.78" width="1" height="1"/><rect x="784.10" y="334.22" width="1" height="1"/><rect x="784.10" y="342.66" width="1" height="1"/><rect x="784.10" y="351.10" width="1" height="1"/><rect x="784.10" y="359.54" width="1" height="1"/><rect x="784.10" y="367.98" width="1" height="1"/><rect x="784.10" y="376.42" width="1" height="1"/><rect x="784.10" y="384.86" width="1" height="1"/><rect x="784.10" y="393.30" width="1" height="1"/><rect x="784.10" y="401.74" width="1" height="1"/><rect x="784.10" y="410.18" width="1" height="1"/><rect x="784.10" y="418.62" width="1" height="1"/><rect x="784.10" y="427.06" width="1" height="1"/><rect x="784.10" y="435.50" width="1" height="1"/><rect x="784.10" y="443.94" width="1" height="1"/></g><g fill="#a8a8a8"><rect x="10.88" y="55.70" width="1" height="1"/><rect x="26.66" y="55.70" width="1" height="1"/><rect x="42.44" y="55.70" width="1" height="1"/><rect x="58.22" y="55.70" width="1" height="1"/><rect x="89.78" y="55.70" width="1" height="1"/><rect x="105.56" y="55.70" width="1" height="1"/><rect x="121.34" y="55.70" width="1" height="1"/><rect x="137.12" y="55.70" width="1" height="1"/><rect x="168.68" y="55.70" width="1" height="1"/><rect x="184.46" y="55.70" width="1" height="1"/><rect x="200.24" y="55.70" width="1" height="1"/><rect x="216.02" y="55.70" width="1" height="1"/><rect x="247.58" y="55.70" width="1" height="1"/><rect x="263.36" y="55.70" width="1" height="1"/><rect x="279.14" y="55.70" width="1" height="1"/><rect x="294.92" y="55.70" width="1" height="1"/><rect x="326.48" y="55.70" width="1" height="1"/><rect x="342.26" y="55.70" width="1" height="1"/><rect x="358.04" y="55.70" width="1" height="1"/><rect x="373.82" y="55.70" width="1" height="1"/><rect x="405.38" y="55.70" width="1" height="1"/><rect x="421.16" y="55.70" width="1" height="1"/><rect x="436.94" y="55.70" width="1" height="1"/><rect x="452.72" y="55.70" width="1" height="1"/><rect x="484.28" y="55.70" width="1" height="1"/><rect x="500.06" y="55.70" width="1" height="1"/><rect x="515.84" y="55.70" width="1" height="1"/><rect x="531.62" y="55.70" width="1" height="1"/><rect x="563.18" y="55.70" width="1" height="1"/><rect x="578.96" y="55.70" width="1" height="1"/><rect x="594.74" y="55.70" width="1" height="1"/><rect x="610.52" y="55.70" width="1" height="1"/><rect x="642.08" y="55.70" width="1" height="1"/><rect x="657.86" y="55.70" width="1" height="1"/><rect x="673.64" y="55.70" width="1" height="1"/><rect x="689.42" y="55.70" width="1" height="1"/><rect x="720.98" y="55.70" width="1" height="1"/><rect x="736.76" y="55.70" width="1" height="1"/><rect x="752.54" y="55.70" width="1" height="1"/><rect x="768.32" y="55.70" width="1" height="1"/><rect x="10.88" y="97.90" width="1" height="1"/><rect x="26.66" y="97.90" width="1" height="1"/><rect x="42.44" y="97.90" width="1" height="1"/><rect x="58.22" y="97.90" width="1" height="1"/><rect x="89.78" y="97.90" width="1" height="1"/><rect x="105.56" y="97.90" width="1" height="1"/><rect x="121.34" y="97.90" width="1" height="1"/><rect x="137.12" y="97.90" width="1" height="1"/><rect x="168.68" y="97.90" width="1" height="1"/><rect x="184.46" y="97.90" width="1" height="1"/><rect x="200.24" y="97.90" width="1" height="1"/><rect x="216.02" y="97.90" width="1" height="1"/><rect x="247.58" y="97.90" width="1" height="1"/><rect x="263.36" y="97.90" width="1" height="1"/><rect x="279.14" y="97.90" width="1" height="1"/><rect x="294.92" y="97.90" width="1" height="1"/><rect x="326.48" y="97.90" width="1" height="1"/><rect x="342.26" y="97.90" width="1" height="1"/><rect x="358.04" y="97.90" width="1" height="1"/><rect x="373.82" y="97.90" width="1" height="1"/><rect x="405.38" y="97.90" width="1" height="1"/><rect x="421.16" y="97.90" width="1" height="1"/><rect x="436.94" y="97.90" width="1" height="1"/><rect x="452.72" y="97.90" width="1" height="1"/><rect x="484.28" y="97.90" width="1" height="1"/><rect x="500.06" y="97.90" width="1" height="1"/><rect x="515.84" y="97.90" width="1" height="1"/><rect x="531.62" y="97.90" width="1" height="1"/><rect x="563.18" y="97.90" width="1" height="1"/><rect x="578.96" y="97.90" width="1" height="1"/><rect x="594.74" y="97.90" width="1" height="1"/><rect x="610.52" y="97.90" width="1" height="1"/><rect x="642.08" y="97.90" width="1" height="1"/><rect x="657.86" y="97.90" width="1" height="1"/><rect x="673.64" y="97.90" width="1" height="1"/><rect x="689.42" y="97.90" width="1" height="1"/><rect x="720.98" y="97.90" width="1" height="1"/><rect x="736.76" y="97.90" width="1" height="1"/><rect x="752.54" y="97.90" width="1" height="1"/><rect x="768.32" y="97.90" width="1" height="1"/><rect x="10.88" y="140.10" width="1" height="1"/><rect x="26.66" y="140.10" width="1" height="1"/><rect x="42.44" y="140.10" width="1" height="1"/><rect x="58.22" y="140.10" width="1" height="1"/><rect x="89.78" y="140.10" width="1" height="1"/><rect x="105.56" y="140.10" width="1" height="1"/><rect x="121.34" y="140.10" width="1" height="1"/><rect x="137.12" y="140.10" width="1" height="1"/><rect x="168.68" y="140.10" width="1" height="1"/><rect x="184.46" y="140.10" width="1" height="1"/><rect x="200.24" y="140.10" width="1" height="1"/><rect x="216.02" y="140.10" width="1" height="1"/><rect x="247.58" y="140.10" width="1" height="1"/><rect x="263.36" y="140.10" width="1" height="1"/><rect x="279.14" y="140.10" width="1" height="1"/><rect x="294.92" y="140.10" width="1" height="1"/><rect x="326.48" y="140.10" width="1" height="1"/><rect x="342.26" y="140.10" width="1" height="1"/><rect x="358.04" y="140.10" width="1" height="1"/><rect x="373.82" y="140.10" width="1" height="1"/><rect x="405.38" y="140.10" width="1" height="1"/><rect x="421.16" y="140.10" width="1" height="1"/><rect x="436.94" y="140.10" width="1" height="1"/><rect x="452.72" y="140.10" width="1" height="1"/><rect x="484.28" y="140.10" width="1" height="1"/><rect x="500.06" y="140.10" width="1" height="1"/><rect x="515.84" y="140.10" width="1" height="1"/><rect x="531.62" y="140.10" width="1" height="1"/><rect x="563.18" y="140.10" width="1" height="1"/><rect x="578.96" y="140.10" width="1" height="1"/><rect x="594.74" y="140.10" width="1" height="1"/><rect x="610.52" y="140.10" width="1" height="1"/><rect x="642.08" y="140.10" width="1" height="1"/><rect x="657.86" y="140.10" width="1" height="1"/><rect x="673.64" y="140.10" width="1" height="1"/><rect x="689.42" y="140.10" width="1" height="1"/><rect x="720.98" y="140.10" width="1" height="1"/><rect x="736.76" y="140.10" width="1" height="1"/><rect x="752.54" y="140.10" width="1" height="1"/><rect x="768.32" y="140.10" width="1" height="1"/><rect x="10.88" y="182.30" width="1" height="1"/><rect x="26.66" y="182.30" width="1" height="1"/><rect x="42.44" y="182.30" width="1" height="1"/><rect x="58.22" y="182.30" width="1" height="1"/><rect x="89.78" y="182.30" width="1" height="1"/><rect x="105.56" y="182.30" width="1" height="1"/><rect x="121.34" y="182.30" width="1" height="1"/><rect x="137.12" y="182.30" width="1" height="1"/><rect x="168.68" y="182.30" width="1" height="1"/><rect x="184.46" y="182.30" width="1" height="1"/><rect x="200.24" y="182.30" width="1" height="1"/><rect x="216.02" y="182.30" width="1" height="1"/><rect x="247.58" y="182.30" width="1" height="1"/><rect x="263.36" y="182.30" width="1" height="1"/><rect x="279.14" y="182.30" width="1" height="1"/><rect x="294.92" y="182.30" width="1" height="1"/><rect x="326.48" y="182.30" width="1" height="1"/><rect x="342.26" y="182.30" width="1" height="1"/><rect x="358.04" y="182.30" width="1" height="1"/><rect x="373.82" y="182.30" width="1" height="1"/><rect x="405.38" y="182.30" width="1" height="1"/><rect x="421.16" y="182.30" width="1" height="1"/><rect x="436.94" y="182.30" width="1" height="1"/><rect x="452.72" y="182.30" width="1" height="1"/><rect x="484.28" y="182.30" width="1" height="1"/><rect x="500.06" y="182.30" width="1" height="1"/><rect x="515.84" y="182.30" width="1" height="1"/><rect x="531.62" y="182.30" width="1" height="1"/><rect x="563.18" y="182.30" width="1" height="1"/><rect x="578.96" y="182.30" width="1" height="1"/><rect x="594.74" y="182.30" width="1" height="1"/><rect x="610.52" y="182.30" width="1" height="1"/><rect x="642.08" y="182.30" width="1" height="1"/><rect x="657.86" y="182.30" width="1" height="1"/><rect x="673.64" y="182.30" width="1" height="1"/><rect x="689.42" y="182.30" width="1" height="1"/><rect x="720.98" y="182.30" width="1" height="1"/><rect x="736.76" y="182.30" width="1" height="1"/><rect x="752.54" y="182.30" width="1" height="1"/><rect x="768.32" y="182.30" width="1" height="1"/><rect x="10.88" y="224.50" width="1" height="1"/><rect x="26.66" y="224.50" width="1" height="1"/><rect x="42.44" y="224.50" width="1" height="1"/><rect x="58.22" y="224.50" width="1" height="1"/><rect x="89.78" y="224.50" width="1" height="1"/><rect x="105.56" y="224.50" width="1" height="1"/><rect x="121.34" y="224.50" width="1" height="1"/><rect x="137.12" y="224.50" width="1" height="1"/><rect x="168.68" y="224.50" width="1" height="1"/><rect x="184.46" y="224.50" width="1" height="1"/><rect x="200.24" y="224.50" width="1" height="1"/><rect x="216.02" y="224.50" width="1" height="1"/><rect x="247.58" y="224.50" width="1" height="1"/><rect x="263.36" y="224.50" width="1" height="1"/><rect x="279.14" y="224.50" width="1" height="1"/><rect x="294.92" y="224.50" width="1" height="1"/><rect x="326.48" y="224.50" width="1" height="1"/><rect x="342.26" y="224.50" width="1" height="1"/><rect x="358.04" y="224.50" width="1" height="1"/><rect x="373.82" y="224.50" width="1" height="1"/><rect x="405.38" y="224.50" width="1" height="1"/><rect x="421.16" y="224.50" width="1" height="1"/><rect x="436.94" y="224.50" width="1" height="1"/><rect x="452.72" y="224.50" width="1" height="1"/><rect x="484.28" y="224.50" width="1" height="1"/><rect x="500.06" y="224.50" width="1" height="1"/><rect x="515.84" y="224.50" width="1" height="1"/><rect x="531.62" y="224.50" width="1" height="1"/><rect x="563.18" y="224.50" width="1" height="1"/><rect x="578.96" y="224.50" width="1" height="1"/><rect x="594.74" y="224.50" width="1" height="1"/><rect x="610.52" y="224.50" width="1" height="1"/><rect x="642.08" y="224.50" width="1" height="1"/><rect x="657.86" y="224.50" width="1" height="1"/><rect x="673.64" y="224.50" width="1" height="1"/><rect x="689.42" y="224.50" width="1" height="1"/><rect x="720.98" y="224.50" width="1" height="1"/><rect x="736.76" y="224.50" width="1" height="1"/><rect x="752.54" y="224.50" width="1" height="1"/><rect x="768.32" y="224.50" width="1" height="1"/><rect x="10.88" y="266.70" width="1" height="1"/><rect x="26.66" y="266.70" width="1" height="1"/><rect x="42.44" y="266.70" width="1" height="1"/><rect x="58.22" y="266.70" width="1" height="1"/><rect x="89.78" y="266.70" width="1" height="1"/><rect x="105.56" y="266.70" width="1" height="1"/><rect x="121.34" y="266.70" width="1" height="1"/><rect x="137.12" y="266.70" width="1" height="1"/><rect x="168.68" y="266.70" width="1" height="1"/><rect x="184.46" y="266.70" width="1" height="1"/><rect x="200.24" y="266.70" width="1" height="1"/><rect x="216.02" y="266.70" width="1" height="1"/><rect x="247.58" y="266.70" width="1" height="1"/><rect x="263.36" y="266.70" width="1" height="1"/><rect x="279.14" y="266.70" width="1" height="1"/><rect x="294.92" y="266.70" width="1" height="1"/><rect x="326.48" y="266.70" width="1" height="1"/><rect x="342.26" y="266.70" width="1" height="1"/><rect x="358.04" y="266.70" width="1" height="1"/><rect x="373.82" y="266.70" width="1" height="1"/><rect x="405.38" y="266.70" width="1" height="1"/><rect x="421.16" y="266.70" width="1" height="1"/><rect x="436.94" y="266.70" width="1" height="1"/><rect x="452.72" y="266.70" width="1" height="1"/><rect x="484.28" y="266.70" width="1" height="1"/><rect x="500.06" y="266.70" width="1" height="1"/><rect x="515.84" y="266.70" width="1" height="1"/><rect x="531.62" y="266.70" width="1" height="1"/><rect x="563.18" y="266.70" width="1" height="1"/><rect x="578.96" y="266.70" width="1" height="1"/><rect x="594.74" y="266.70" width="1" height="1"/><rect x="610.52" y="266.70" width="1" height="1"/><rect x="642.08" y="266.70" width="1" height="1"/><rect x="657.86" y="266.70" width="1" height="1"/><rect x="673.64" y="266.70" width="1" height="1"/><rect x="689.42" y="266.70" width="1" height="1"/><rect x="720.98" y="266.70" width="1" height="1"/><rect x="736.76" y="266.70" width="1" height="1"/><rect x="752.54" y="266.70" width="1" height="1"/><rect x="768.32" y="266.70" width="1" height="1"/><rect x="10.88" y="308.90" width="1" height="1"/><rect x="26.66" y="308.90" width="1" height="1"/><rect x="42.44" y="308.90" width="1" height="1"/><rect x="58.22" y="308.90" width="1" height="1"/><rect x="89.78" y="308.90" width="1" height="1"/><rect x="105.56" y="308.90" width="1" height="1"/><rect x="121.34" y="308.90" width="1" height="1"/><rect x="137.12" y="308.90" width="1" height="1"/><rect x="168.68" y="308.90" width="1" height="1"/><rect x="184.46" y="308.90" width="1" height="1"/><rect x="200.24" y="308.90" width="1" height="1"/><rect x="216.02" y="308.90" width="1" height="1"/><rect x="247.58" y="308.90" width="1" height="1"/><rect x="263.36" y="308.90" width="1" height="1"/><rect x="279.14" y="308.90" width="1" height="1"/><rect x="294.92" y="308.90" width="1" height="1"/><rect x="326.48" y="308.90" width="1" height="1"/><rect x="342.26" y="308.90" width="1" height="1"/><rect x="358.04" y="308.90" width="1" height="1"/><rect x="373.82" y="308.90" width="1" height="1"/><rect x="405.38" y="308.90" width="1" height="1"/><rect x="421.16" y="308.90" width="1" height="1"/><rect x="436.94" y="308.90" width="1" height="1"/><rect x="452.72" y="308.90" width="1" height="1"/><rect x="484.28" y="308.90" width="1" height="1"/><rect x="500.06" y="308.90" width="1" height="1"/><rect x="515.84" y="308.90" width="1" height="1"/><rect x="531.62" y="308.90" width="1" height="1"/><rect x="563.18" y="308.90" width="1" height="1"/><rect x="578.96" y="308.90" width="1" height="1"/><rect x="594.74" y="308.90" width="1" height="1"/><rect x="610.52" y="308.90" width="1" height="1"/><rect x="642.08" y="308.90" width="1" height="1"/><rect x="657.86" y="308.90" width="1" height="1"/><rect x="673.64" y="308.90" width="1" height="1"/><rect x="689.42" y="308.90" width="1" height="1"/><rect x="720.98" y="308.90" width="1" height="1"/><rect x="736.76" y="308.90" width="1" height="1"/><rect x="752.54" y="308.90" width="1" height="1"/><rect x="768.32" y="308.90" width="1" height="1"/><rect x="10.88" y="351.10" width="1" height="1"/><rect x="26.66" y="351.10" width="1" height="1"/><rect x="42.44" y="351.10" width="1" height="1"/><rect x="58.22" y="351.10" width="1" height="1"/><rect x="89.78" y="351.10" width="1" height="1"/><rect x="105.56" y="351.10" width="1" height="1"/><rect x="121.34" y="351.10" width="1" height="1"/><rect x="137.12" y="351.10" width="1" height="1"/><rect x="168.68" y="351.10" width="1" height="1"/><rect x="184.46" y="351.10" width="1" height="1"/><rect x="200.24" y="351.10" width="1" height="1"/><rect x="216.02" y="351.10" width="1" height="1"/><rect x="247.58" y="351.10" width="1" height="1"/><rect x="263.36" y="351.10" width="1" height="1"/><rect x="279.14" y="351.10" width="1" height="1"/><rect x="294.92" y="351.10" width="1" height="1"/><rect x="326.48" y="351.10" width="1" height="1"/><rect x="342.26" y="351.10" width="1" height="1"/><rect x="358.04" y="351.10" width="1" height="1"/><rect x="373.82" y="351.10" width="1" height="1"/><rect x="405.38" y="351.10" width="1" height="1"/><rect x="421.16" y="351.10" width="1" height="1"/><rect x="436.94" y="351.10" width="1" height="1"/><rect x="452.72" y="351.10" width="1" height="1"/><rect x="484.28" y="351.10" width="1" height="1"/><rect x="500.06" y="351.10" width="1" height="1"/><rect x="515.84" y="351.10" width="1" height="1"/><rect x="531.62" y="351.10" width="1" height="1"/><rect x="563.18" y="351.10" width="1" height="1"/><rect x="578.96" y="351.10" width="1" height="1"/><rect x="594.74" y="351.10" width="1" height="1"/><rect x="610.52" y="351.10" width="1" height="1"/><rect x="642.08" y="351.10" width="1" height="1"/><rect x="657.86" y="351.10" width="1" height="1"/><rect x="673.64" y="351.10" width="1" height="1"/><rect x="689.42" y="351.10" width="1" height="1"/><rect x="720.98" y="351.10" width="1" height="1"/><rect x="736.76" y="351.10" width="1" height="1"/><rect x="752.54" y="351.10" width="1" height="1"/><rect x="768.32" y="351.10" width="1" height="1"/><rect x="10.88" y="393.30" width="1" height="1"/><rect x="26.66" y="393.30" width="1" height="1"/><rect x="42.44" y="393.30" width="1" height="1"/><rect x="58.22" y="393.30" width="1" height="1"/><rect x="89.78" y="393.30" width="1" height="1"/><rect x="105.56" y="393.30" width="1" height="1"/><rect x="121.34" y="393.30" width="1" height="1"/><rect x="137.12" y="393.30" width="1" height="1"/><rect x="168.68" y="393.30" width="1" height="1"/><rect x="184.46" y="393.30" width="1" height="1"/><rect x="200.24" y="393.30" width="1" height="1"/><rect x="216.02" y="393.30" width="1" height="1"/><rect x="247.58" y="393.30" width="1" height="1"/><rect x="263.36" y="393.30" width="1" height="1"/><rect x="279.14" y="393.30" width="1" height="1"/><rect x="294.92" y="393.30" width="1" height="1"/><rect x="326.48" y="393.30" width="1" height="1"/><rect x="342.26" y="393.30" width="1" height="1"/><rect x="358.04" y="393.30" width="1" height="1"/><rect x="373.82" y="393.30" width="1" height="1"/><rect x="405.38" y="393.30" width="1" height="1"/><rect x="421.16" y="393.30" width="1" height="1"/><rect x="436.94" y="393.30" width="1" height="1"/><rect x="452.72" y="393.30" width="1" height="1"/><rect x="484.28" y="393.30" width="1" height="1"/><rect x="500.06" y="393.30" width="1" height="1"/><rect x="515.84" y="393.30" width="1" height="1"/><rect x="531.62" y="393.30" width="1" height="1"/><rect x="563.18" y="393.30" width="1" height="1"/><rect x="578.96" y="393.30" width="1" height="1"/><rect x="594.74" y="393.30" width="1" height="1"/><rect x="610.52" y="393.30" width="1" height="1"/><rect x="642.08" y="393.30" width="1" height="1"/><rect x="657.86" y="393.30" width="1" height="1"/><rect x="673.64" y="393.30" width="1" height="1"/><rect x="689.42" y="393.30" width="1" height="1"/><rect x="720.98" y="393.30" width="1" height="1"/><rect x="736.76" y="393.30" width="1" height="1"/><rect x="752.54" y="393.30" width="1" height="1"/><rect x="768.32" y="393.30" width="1" height="1"/><rect x="10.88" y="435.50" width="1" height="1"/><rect x="26.66" y="435.50" width="1" height="1"/><rect x="42.44" y="435.50" width="1" height="1"/><rect x="58.22" y="435.50" width="1" height="1"/><rect x="89.78" y="435.50" width="1" height="1"/><rect x="105.56" y="435.50" width="1" height="1"/><rect x="121.34" y="435.50" width="1" height="1"/><rect x="137.12" y="435.50" width="1" height="1"/><rect x="168.68" y="435.50" width="1" height="1"/><rect x="184.46" y="435.50" width="1" height="1"/><rect x="200.24" y="435.50" width="1" height="1"/><rect x="216.02" y="435.50" width="1" height="1"/><rect x="247.58" y="435.50" width="1" height="1"/><rect x="263.36" y="435.50" width="1" height="1"/><rect x="279.14" y="435.50" width="1" height="1"/><rect x="294.92" y="435.50" width="1" height="1"/><rect x="326.48" y="435.50" width="1" height="1"/><rect x="342.26" y="435.50" width="1" height="1"/><rect x="358.04" y="435.50" width="1" height="1"/><rect x="373.82" y="435.50" width="1" height="1"/><rect x="405.38" y="435.50" width="1" height="1"/><rect x="421.16" y="435.50" width="1" height="1"/><rect x="436.94" y="435.50" width="1" height="1"/><rect x="452.72" y="435.50" width="1" height="1"/><rect x="484.28" y="435.50" width="1" height="1"/><rect x="500.06" y="435.50" width="1" height="1"/><rect x="515.84" y="435.50" width="1" height="1"/><rect x="531.62" y="435.50" width="1" height="1"/><rect x="563.18" y="435.50" width="1" height="1"/><rect x="578.96" y="435.50" width="1" height="1"/><rect x="594.74" y="435.50" width="1" height="1"/><rect x="610.52" y="435.50" width="1" height="1"/><rect x="642.08" y="435.50" width="1" height="1"/><rect x="657.86" y="435.50" width="1" height="1"/><rect x="673.64" y="435.50" width="1" height="1"/><rect x="689.42" y="435.50" width="1" height="1"/><rect x="720.98" y="435.50" width="1" height="1"/><rect x="736.76" y="435.50" width="1" height="1"/><rect x="752.54" y="435.50" width="1" height="1"/><rect x="768.32" y="435.50" width="1" height="1"/></g>
 <path d="M266.5,16.5 L264.5,16.5 L264.5,23.5 L266.5,23.5" fill="none" stroke="#d0d0d0" stroke-width="1"/>
 <line x1="264.5" y1="20.5" x2="526.5" y2="20.5" stroke="#c8c8c8" stroke-width="1"/>
 <path d="M524.5,16.5 L526.5,16.5 L526.5,23.5 L524.5,23.5" fill="none" stroke="#d0d0d0" stroke-width="1"/>
 <path d="M338.5,15 L344.5,15 L341.5,17.5 Z" fill="#f08a20"/>
 <rect x="339" y="17.5" width="5" height="6" fill="#3a2a1a" stroke="#e88a2a" stroke-width="0.8"/>
 <path d="M228.6,26 L236.4,26 L232.5,29.6 Z" fill="#f39025"/>
 <rect x="228.8" y="30.5" width="7.6" height="9" fill="#140a04" stroke="#e8882a" stroke-width="1"/>
 <text x="232.6" y="38" font-size="7" fill="#eee" text-anchor="middle" font-family="Liberation Sans" font-weight="bold">T</text>
 <path d="M771,28.3 L786.8,28.3 L786.8,44.1 Z" fill="#4a4a4a"/>
 <circle cx="783.3" cy="31.7" r="2.1" fill="none" stroke="#b0b0b0" stroke-width="0.9"/>
 <line x1="781.8" y1="33.2" x2="778.8" y2="36.3" stroke="#b0b0b0" stroke-width="0.9"/>
 <path d="M3,303.5 L14,303.5 L18.8,309 L14,314.5 L3,314.5 Z" fill="#f4e428"/><path d="M3,303.6 L14,303.6 L18.8,309 L14,314.4 L3,314.4" fill="none" stroke="#2e2a08" stroke-width="0.9"/>
 <text x="10.5" y="311.3" font-size="6.3" fill="#1a1a1a" text-anchor="middle" font-family="Liberation Sans" font-weight="bold">C 1</text>
 <line x1="785.5" y1="281.9" x2="789.8" y2="281.9" stroke="#e8e070" stroke-width="1.1"/>
 <path d="M780.2,281.9 L785.6,277.4 L785.6,286.4 Z" fill="#f2e418"/><path d="M785.6,277.4 L780.2,281.9 L785.6,286.4" fill="none" stroke="#5a5208" stroke-width="0.9" stroke-linejoin="round"/>
</svg>
<!-- y labels -->
<div class="ylab" style="left:757px;top:53.5px">30 V</div>
<div class="ylab" style="left:757px;top:95.7px">25 V</div>
<div class="ylab" style="left:757px;top:137.9px">20 V</div>
<div class="ylab" style="left:757px;top:180.1px">15 V</div>
<div class="ylab" style="left:757px;top:222.3px">10 V</div>
<div class="ylab" style="left:757px;top:264.5px">5 V</div>
<div class="ylab" style="left:757px;top:306.7px">0 V</div>
<div class="ylab" style="left:757px;top:348.9px">-5 V</div>
<div class="ylab" style="left:757px;top:391.1px">-10 V</div>
<div class="ylab" style="left:757px;top:433.3px">-15 V</div>
<!-- x labels -->
<div class="xlab" style="left:60px;top:439.5px">-8 µs</div>
<div class="xlab" style="left:139px;top:439.5px">-4 µs</div>
<div class="xlab" style="left:218px;top:439.5px">0 s</div>
<div class="xlab" style="left:297px;top:439.5px">4 µs</div>
<div class="xlab" style="left:376px;top:439.5px">8 µs</div>
<div class="xlab" style="left:455px;top:439.5px">12 µs</div>
<div class="xlab" style="left:534px;top:439.5px">16 µs</div>
<div class="xlab" style="left:613px;top:439.5px">20 µs</div>
<div class="xlab" style="left:692px;top:439.5px">24 µs</div>
<!-- cursor readouts -->
<div class="cur" style="left:27px;top:127px;width:63px;height:11.5px">v: 20.187 V</div>
<div class="cur" style="left:27px;top:243px;width:63px;height:11.5px">Δv: 26.113 V</div>
<div class="cur" style="left:27px;top:359.5px;width:63px;height:11.5px">v: -5.925 V</div>
<svg width="866" height="487" style="position:absolute;left:0;top:0;pointer-events:none"><line x1="35.85" y1="243" x2="35.64" y2="255" stroke="#eee440" stroke-width="1.1"/></svg>
<!-- cursor badges -->
<div class="a" style="left:3px;top:134.8px;width:10px;height:8.6px;background:#2c7cc0;border-radius:2px 0 0 2px;color:#fff;font-size:6px;line-height:8.5px;text-align:center">A</div>
<div class="a" style="left:13px;top:134.8px;width:11.5px;height:8.6px;background:#e6d848;border-radius:0 2px 2px 0;color:#222;font-size:7px;line-height:8.5px;text-align:center">C1</div>
<div class="a" style="left:3px;top:355.5px;width:10px;height:8.6px;background:#2c7cc0;border-radius:2px 0 0 2px;color:#fff;font-size:6px;line-height:8.5px;text-align:center">B</div>
<div class="a" style="left:13px;top:355.5px;width:11.5px;height:8.6px;background:#e6d848;border-radius:0 2px 2px 0;color:#222;font-size:7px;line-height:8.5px;text-align:center">C1</div>
<div class="a" style="left:23.2px;top:294px;color:#e8d818;font-size:8px;line-height:9px;-webkit-text-stroke:0.25px #706400">Vgs</div>

<!-- right panel -->
<div class="a rpanel"></div>
<div class="a" style="left:791px;top:13px;width:7.5px;height:435px;background:#262626"></div>
<div class="a" style="left:798px;top:13px;width:68px;height:435px;border-top:1px solid #4a4a4a;border-left:1px solid #363636;border-bottom:1px solid #505050"></div>
<div class="a" style="left:805.3px;top:-0.6px;color:#fff;font-size:13px;line-height:15px;font-weight:bold;letter-spacing:-0.3px;transform:scaleX(0.93);transform-origin:0 0;-webkit-text-stroke:0.35px #fff">Tektronix</div>
<svg width="866" height="20" style="position:absolute;left:0;top:0"><path d="M818.6,11.6 L821.2,11.6 L823.6,5.2 L821,5.2 Z" fill="#18a0d8"/></svg>
<div class="a" style="left:815px;top:13.5px;color:#e0e0e0;font-size:7.5px;line-height:8px">Add New...</div>
<div class="btn" style="left:801.5px;top:24px">Cursors</div>
<div class="btn" style="left:834px;top:24px">Callout</div>
<div class="btn" style="left:801.5px;top:45.5px">Measure</div>
<div class="btn" style="left:834px;top:45.5px">Search</div>
<div class="btn" style="left:801.5px;top:66px;line-height:7px;padding-top:0.5px">Results<br>Table</div>
<div class="btn" style="left:834px;top:66px">Plot</div>
<div class="a" style="left:800px;top:85.5px;width:63px;height:1px;background:#505050"></div>
<div class="btn" style="left:801.5px;top:88px;height:17px"><svg width="28" height="16" style="position:absolute;left:0;top:0"><rect x="8.4" y="2.7" width="10.6" height="9.6" fill="none" stroke="#d8d8d8" stroke-width="1" stroke-dasharray="1.2,1.2"/><circle cx="14.3" cy="6.8" r="2.6" fill="#202020" stroke="#eee" stroke-width="1"/><line x1="12.5" y1="8.6" x2="10" y2="11" stroke="#eee" stroke-width="1.1"/><path d="M17.5,10 L20.5,12.8 L17.8,13 Z" fill="#ddd"/></svg></div>
<div class="btn" style="left:834px;top:88px;height:17px">More...</div>

<div class="meas" style="top:113.8px"><div class="mh">Meas 1</div><svg class="badge" width="11" height="7" style="left:51.5px;top:0.7px;width:11px;height:7px;box-shadow:none;border-radius:0"><rect x="0.5" y="0.5" width="10" height="6" rx="3" fill="#e8e030" stroke="#2a2a2a" stroke-width="0.6"/><text x="5.5" y="5.4" font-size="5.5" text-anchor="middle" fill="#333" font-family="Liberation Sans">1</text></svg><div class="mb">Maximum<br>µ': 20.10 V</div></div>
<div class="meas" style="top:142.9px"><div class="mh">Meas 2</div><svg class="badge" width="11" height="7" style="left:51.5px;top:0.7px;width:11px;height:7px;box-shadow:none;border-radius:0"><rect x="0.5" y="0.5" width="10" height="6" rx="3" fill="#e8e030" stroke="#2a2a2a" stroke-width="0.6"/><text x="5.5" y="5.4" font-size="5.5" text-anchor="middle" fill="#333" font-family="Liberation Sans">1</text></svg><div class="mb">Minimum<br>µ': -5.900 V</div></div>
<div class="meas" style="top:172.1px"><div class="mh">Meas 3</div><svg class="badge" width="11" height="7" style="left:51.5px;top:0.7px;width:11px;height:7px;box-shadow:none;border-radius:0"><rect x="0.5" y="0.5" width="10" height="6" rx="3" fill="#28b0c8" stroke="#2a2a2a" stroke-width="0.6"/><text x="5.5" y="5.4" font-size="5.5" text-anchor="middle" fill="#333" font-family="Liberation Sans">2</text></svg><div class="mb">Maximum<br>µ': 40.00 mA</div></div>
<div class="meas" style="top:201.3px"><div class="mh">Meas 4</div><svg class="badge" width="11" height="7" style="left:51.5px;top:0.7px;width:11px;height:7px;box-shadow:none;border-radius:0"><rect x="0.5" y="0.5" width="10" height="6" rx="3" fill="#e04a60" stroke="#2a2a2a" stroke-width="0.6"/><text x="5.5" y="5.4" font-size="5.5" text-anchor="middle" fill="#333" font-family="Liberation Sans">3</text></svg><div class="mb">Maximum<br>µ': 1.600 A</div></div>
<div class="meas" style="top:230.6px"><div class="mh">Meas 5</div><svg class="badge" width="11" height="7" style="left:51.5px;top:0.7px;width:11px;height:7px;box-shadow:none;border-radius:0"><rect x="0.5" y="0.5" width="10" height="6" rx="3" fill="#6cc030" stroke="#2a2a2a" stroke-width="0.6"/><text x="5.5" y="5.4" font-size="5.5" text-anchor="middle" fill="#333" font-family="Liberation Sans">4</text></svg><div class="mb">Maximum<br>µ': 510.0 mV</div></div>
<div class="meas" style="top:259.9px"><div class="mh" style="background:#0a0a0a;color:#8ed040">Meas 6</div><svg class="badge" width="11" height="7" style="left:51.5px;top:0.7px;width:11px;height:7px;box-shadow:none;border-radius:0"><rect x="0.5" y="0.5" width="10" height="6" rx="3" fill="#6cc030" stroke="#2a2a2a" stroke-width="0.6"/><text x="5.5" y="5.4" font-size="5.5" text-anchor="middle" fill="#333" font-family="Liberation Sans">4</text></svg><div class="mb">Minimum<br>µ': -50.00 mV</div></div>
<div class="a" style="left:794px;top:225px;width:1.5px;height:1.5px;background:#bbb"></div>
<div class="a" style="left:794px;top:229.5px;width:1.5px;height:1.5px;background:#bbb"></div>
<div class="a" style="left:794px;top:234px;width:1.5px;height:1.5px;background:#bbb"></div>

<!-- bottom bar -->
<div class="a bot"></div>
<div class="ch" style="left:1px"><div class="chh" style="background:#f0e43a;color:#111">Ch 1</div><div class="chb" style="background:#cdcdcd">5 V/div<br>1 MΩ<br>1 GHz</div></div>
<div class="ch" style="left:44px"><div class="chh" style="background:#2a98a2;color:#0c4850;position:relative">Ch 2<svg width="8" height="9" style="position:absolute;left:20.5px;top:0"><path d="M2.5,1.2 L2.5,6.5 M0.3,4.3 L2.5,7.3 L4.7,4.3" fill="none" stroke="#0a2a30" stroke-width="1.2"/></svg></div><div class="chb" style="position:relative">1 A/div<br>1 MΩ<br>500 MHz<span style="position:absolute;left:33px;top:17px;font-size:5px">ᵍ↙</span></div></div>
<div class="ch" style="left:87px"><div class="chh" style="background:#c04858;color:#f2b0b8;position:relative">Ch 3<svg width="8" height="9" style="position:absolute;left:20.5px;top:0"><path d="M2.5,1.2 L2.5,6.5 M0.3,4.3 L2.5,7.3 L4.7,4.3" fill="none" stroke="#3a0810" stroke-width="1.2"/></svg></div><div class="chb">20 A/div<br>50 Ω &nbsp;&nbsp;DS<br>1 GHz</div></div>
<div class="ch" style="left:130px"><div class="chh" style="background:#6a9e32;color:#1e3a0a">Ch 4</div><div class="chb" style="position:relative">2 V/div<br>1 MΩ<br>200 MHz<span style="position:absolute;left:33px;top:17px;font-size:5px">ᵍ↙</span></div></div>
<div class="ch" style="left:173px"><div class="chh" style="background:#c07c34;color:#4a2a08">Math 1</div><div class="chb">1 mV/div<br>INTG(Ch3...</div></div>

<div class="a" style="left:503px;top:449px;width:1px;height:37px;background:#444"></div>
<div class="a" style="left:571px;top:449px;width:1px;height:37px;background:#444"></div>
<div class="btn" style="left:508px;top:450px;width:18.5px;height:35.5px;line-height:6.9px;padding-top:8px;font-size:7px;border-color:#454545;background:#1c1c1c">Add<br>New<br>Math</div>
<div class="btn" style="left:529px;top:450px;width:18px;height:35.5px;line-height:6.9px;padding-top:8px;font-size:7px;border-color:#454545;background:#1c1c1c">Add<br>New<br>Ref</div>
<div class="btn" style="left:549px;top:450px;width:18px;height:35.5px;line-height:6.9px;padding-top:8px;font-size:7px;border-color:#454545;background:#1c1c1c">Add<br>New<br>Bus</div>
<div class="a" style="left:511px;top:454px;width:13px;height:1.6px;background:#7a48a0"></div>
<div class="a" style="left:531px;top:454px;width:13px;height:1.6px;background:#8a8a8a"></div>
<div class="a" style="left:551px;top:454px;width:13px;height:1.6px;background:#7a48a0"></div>

<div class="pnl" style="left:577px;width:89.5px"><div class="pnh">Horizontal</div><div class="pnb" style="font-size:6.3px;padding-top:2.2px">4 µs/div<br>SR: 6.25 GS/s<br>RL: 250 kpts<div style="position:absolute;left:50px;top:2.2px;font-size:6.9px">40 µs<br>160 ps/pt<br><span style="display:inline-block;width:3px;height:5px;background:#e07a28;border-radius:1px;margin-right:2.5px;vertical-align:-0.5px"></span>29.3%</div></div></div>
<div class="pnl" style="left:669px;width:72px"><div class="pnh">Trigger</div><div class="pnb" style="font-size:6.8px;padding-top:2.2px"><span style="position:absolute;left:3px;top:3.5px;width:14px;height:7px;background:#f0e030;border:0.8px solid #333;border-radius:2px;font-size:5px;line-height:5.5px;text-align:center">1</span><span style="position:absolute;left:21px;top:2px;color:#444">⟋</span><span style="position:absolute;left:32.5px;top:2.2px">3.2 V</span></div></div>
<div class="pnl" style="left:744px;width:66.5px"><div class="pnh">Acquisition</div><div class="pnb" style="font-size:6.8px;padding-top:2.2px">Auto,<span style="position:absolute;left:38.5px">Analyze</span><br>Sample: 8 bits<br>0 Acqs</div></div>
<div class="a" style="left:816px;top:449px;width:1px;height:37px;background:#444"></div>
<div class="a" style="left:821.5px;top:450.5px;width:40.5px;height:15.5px;background:#ee1c26;border-radius:2.5px;color:#fff;font-size:6.2px;line-height:15.5px;text-align:center">Preview</div>
<div class="a" style="left:821.5px;top:470px;width:40.5px;height:15px;background:#cbcbcb;border-radius:2px;color:#111;font-size:6.6px;line-height:7.3px;text-align:center;padding-top:0.5px">01 Sep 2022<br>8:25:38 PM</div>
</body></html>
